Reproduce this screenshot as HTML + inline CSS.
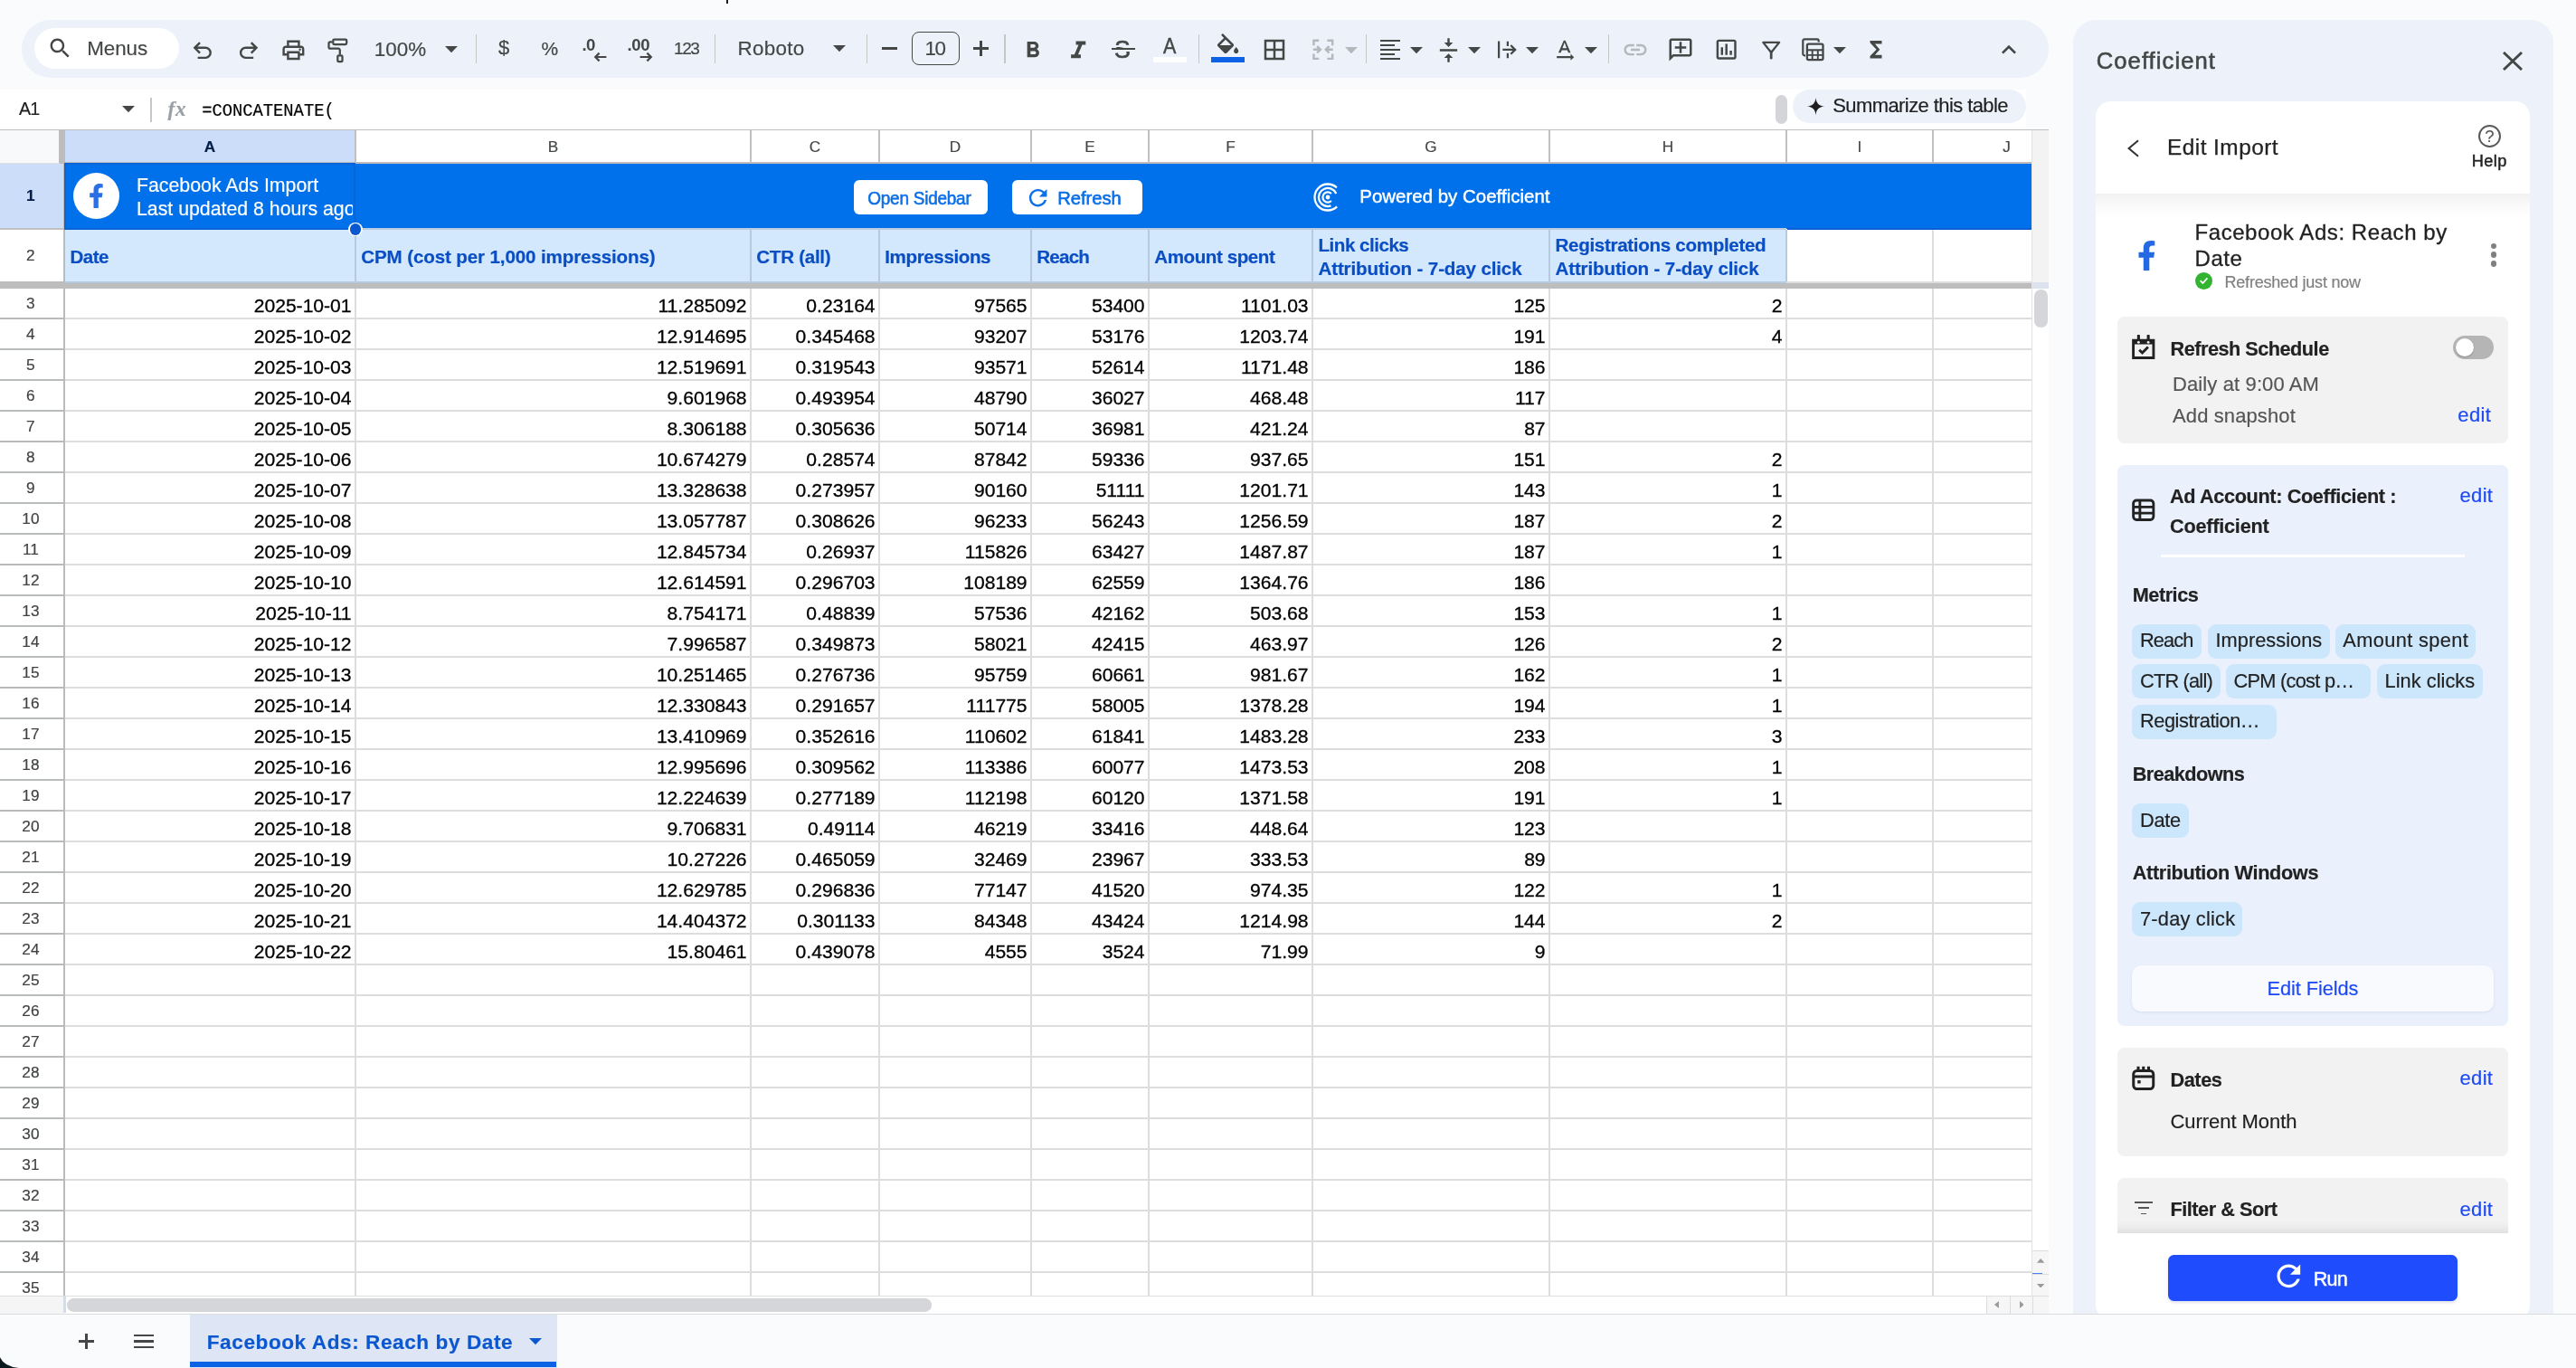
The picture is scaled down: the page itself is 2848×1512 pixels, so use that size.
<!DOCTYPE html>
<html><head><meta charset="utf-8"><title>Facebook Ads: Reach by Date - Google Sheets</title>
<style>
html,body{margin:0;padding:0;}
body{width:2848px;height:1512px;overflow:hidden;position:relative;background:#f9fbfd;font-family:"Liberation Sans",sans-serif;}
.a{position:absolute;display:block;}
.t{position:absolute;white-space:nowrap;-webkit-text-stroke:0.18px;}
#root{position:absolute;left:0;top:0;width:2848px;height:1512px;overflow:hidden;will-change:transform;}
</style></head><body><div id="root">
<div class="a" style="left:802px;top:0px;width:4.4px;height:5px;background:#fff;"></div>
<div class="a" style="left:803px;top:0px;width:2.4px;height:3.9px;background:#1a1a1a;"></div>
<div class="a" style="left:24px;top:22px;width:2241px;height:64px;background:#edf2fa;border-radius:32px;"></div>
<div class="a" style="left:38px;top:31px;width:160px;height:45px;background:#fff;border-radius:23px;"></div>
<svg class="a" style="left:51.9px;top:38.5px;" width="28.8" height="28.8" viewBox="0 0 24 24"><g fill="#444746"><path d="M15.5 14h-.79l-.28-.27C15.41 12.59 16 11.11 16 9.5 16 5.91 13.09 3 9.5 3S3 5.91 3 9.5 5.91 16 9.5 16c1.61 0 3.09-.59 4.23-1.57l.27.28v.79l5 4.99L20.49 19l-4.99-5zm-6 0C7.01 14 5 11.99 5 9.5S7.01 5 9.5 5 14 7.01 14 9.5 11.99 14 9.5 14z"/></g></svg>
<div class="t " style="left:96.25px;top:39.73px;font-size:22.4px;line-height:27px;color:#444746;letter-spacing:-0.094px;">Menus</div>
<svg class="a" style="left:210.1px;top:42.2px;" width="28.8" height="28.8" viewBox="0 0 24 24"><g fill="none" stroke="#444746" stroke-width="2"><path d="M9.2 4.2 L4.4 9 L9.2 13.8 M4.6 9 H14.3 a4.6 4.6 0 0 1 0 9.2 H7.2" stroke-linejoin="miter"/></g></svg>
<svg class="a" style="left:259.9px;top:42.2px;" width="28.8" height="28.8" viewBox="0 0 24 24"><g fill="none" stroke="#444746" stroke-width="2"><path d="M14.8 4.2 L19.6 9 L14.8 13.8 M19.4 9 H9.7 a4.6 4.6 0 0 0 0 9.2 H16.8" stroke-linejoin="miter"/></g></svg>
<svg class="a" style="left:310.1px;top:40.9px;" width="28.8" height="28.8" viewBox="0 0 24 24"><g fill="#444746"><path d="M19 8h-1V3H6v5H5c-1.66 0-3 1.34-3 3v6h4v4h12v-4h4v-6c0-1.66-1.34-3-3-3zM8 5h8v3H8V5zm8 12v2H8v-4h8v2zm2-2v-2H6v2H4v-4c0-.55.45-1 1-1h14c.55 0 1 .45 1 1v4h-2z"/><circle cx="18" cy="11.5" r="1"/></g></svg>
<svg class="a" style="left:360px;top:40px;" width="28" height="32" viewBox="360 40 28 32"><g fill="none" stroke="#444746" stroke-width="2.25" stroke-linejoin="round"><rect x="368.3" y="43.5" width="14.9" height="5.6" rx="1.3"/><path d="M367.4 46.3h-2.2a1.7 1.7 0 0 0-1.7 1.7v4a1.7 1.7 0 0 0 1.7 1.7h8.9a1.7 1.7 0 0 1 1.7 1.7v5"/><rect x="373.3" y="61.4" width="5.2" height="6.7" rx="1.2"/></g></svg>
<div class="t " style="left:413.75px;top:40.73px;font-size:22.4px;line-height:27px;color:#444746;letter-spacing:0.083px;">100%</div>
<svg class="a" style="left:492.3px;top:51.0px;" width="14" height="7.2" viewBox="0 0 14 7.2"><path d="M0 0h14l-7 7.2z" fill="#444746"/></svg>
<div class="a" style="left:525.7px;top:38px;width:1.6px;height:32px;background:#c4c7c5;"></div>
<div class="t " style="left:551px;top:40.37px;font-size:22px;line-height:26px;color:#444746;">$</div>
<div class="t " style="left:598.5px;top:41.22px;font-size:21px;line-height:25px;color:#444746;">%</div>
<div class="t " style="left:643.4px;top:38.55px;font-size:18.6px;line-height:22px;color:#444746;font-weight:bold;letter-spacing:-0.5px;-webkit-text-stroke:0;">.0</div>
<svg class="a" style="left:651.5px;top:50.6px;" width="24" height="24" viewBox="0 0 24 24"><g fill="none" stroke="#444746" stroke-width="2.2"><path d="M18.4 12H6.6M10.6 7.6 L6.2 12 L10.6 16.4"/></g></svg>
<div class="t " style="left:693.4px;top:38.55px;font-size:18.6px;line-height:22px;color:#444746;font-weight:bold;letter-spacing:-0.3px;-webkit-text-stroke:0;">.00</div>
<svg class="a" style="left:701.5px;top:50.6px;" width="24" height="24" viewBox="0 0 24 24"><g fill="none" stroke="#444746" stroke-width="2.2"><path d="M5.6 12H17.4M13.4 7.6 L17.8 12 L13.4 16.4"/></g></svg>
<div class="t " style="left:745px;top:41.91px;font-size:19px;line-height:23px;color:#444746;letter-spacing:-1.4px;">123</div>
<div class="a" style="left:789.7px;top:38px;width:1.6px;height:32px;background:#c4c7c5;"></div>
<div class="t " style="left:815.5px;top:39.53px;font-size:22.4px;line-height:27px;color:#444746;letter-spacing:0.325px;">Roboto</div>
<svg class="a" style="left:921px;top:50.0px;" width="14" height="7.2" viewBox="0 0 14 7.2"><path d="M0 0h14l-7 7.2z" fill="#444746"/></svg>
<div class="a" style="left:957.7px;top:38px;width:1.6px;height:32px;background:#c4c7c5;"></div>
<div class="a" style="left:975px;top:52.4px;width:16.5px;height:2.6px;background:#444746;"></div>
<div class="a" style="left:1008px;top:35px;width:53px;height:36.5px;box-sizing:border-box;border:1.6px solid #444746;border-radius:8px;"></div>
<div class="t " style="left:1022.6px;top:39.53px;font-size:22.4px;line-height:27px;color:#444746;letter-spacing:-1.6px;">10</div>
<div class="a" style="left:1076px;top:52.4px;width:16.5px;height:2.6px;background:#444746;"></div>
<div class="a" style="left:1083px;top:45.4px;width:2.6px;height:16.5px;background:#444746;"></div>
<div class="a" style="left:1110.2px;top:38px;width:1.6px;height:32px;background:#c4c7c5;"></div>
<svg class="a" style="left:1127.4px;top:40.8px;" width="29.6" height="29.6" viewBox="0 0 24 24"><g fill="#444746"><path d="M15.6 10.79c.97-.67 1.65-1.77 1.65-2.79 0-2.26-1.75-4-4-4H7v14h7.04c2.09 0 3.71-1.7 3.71-3.79 0-1.52-.86-2.82-2.15-3.42zM10 6.5h3c.83 0 1.5.67 1.5 1.5s-.67 1.5-1.5 1.5h-3v-3zm3.5 9H10v-3h3.5c.83 0 1.5.67 1.5 1.5s-.67 1.5-1.5 1.5z"/></g></svg>
<svg class="a" style="left:1176.0px;top:40.4px;" width="32.4" height="32.4" viewBox="0 0 24 24"><g fill="#444746"><path d="M10 4v3h2.21l-3.42 8H6v3h8v-3h-2.21l3.42-8H18V4z"/></g></svg>
<div class="t " style="left:1232.2px;top:38.33px;font-size:27.6px;line-height:33px;color:#444746;transform:scaleX(.96);transform-origin:left;-webkit-text-stroke:0.7px #444746;">S</div>
<div class="a" style="left:1228.8px;top:52.5px;width:25.8px;height:2.3px;background:#444746;"></div>
<div class="a" style="left:1228.8px;top:50.3px;width:25.8px;height:2.2px;background:#edf2fa;"></div>
<div class="a" style="left:1228.8px;top:54.8px;width:25.8px;height:2.2px;background:#edf2fa;"></div>
<div class="t " style="left:1285.6px;top:36.24px;font-size:24.4px;line-height:29px;color:#444746;transform:scaleX(.88);transform-origin:left;-webkit-text-stroke:0.45px #444746;">A</div>
<div class="a" style="left:1275px;top:63px;width:37px;height:6px;background:#fff;"></div>
<div class="a" style="left:1324.7px;top:38px;width:1.6px;height:32px;background:#c4c7c5;"></div>
<svg class="a" style="left:1341.6px;top:37.2px;" width="31.2" height="31.2" viewBox="0 0 24 24"><path fill="#444746" d="M16.56 8.94L7.62 0 6.21 1.41l2.38 2.38-5.15 5.15c-.59.59-.59 1.54 0 2.12l5.5 5.5c.29.29.68.44 1.06.44s.77-.15 1.06-.44l5.5-5.5c.59-.58.59-1.53 0-2.12zM5.21 10L10 5.21 14.79 10H5.21zM19 11.5s-2 2.17-2 3.5c0 1.1.9 2 2 2s2-.9 2-2c0-1.33-2-3.5-2-3.5z"/></svg>
<div class="a" style="left:1339px;top:63px;width:37px;height:6px;background:#0b62e6;"></div>
<svg class="a" style="left:1394.4px;top:40.2px;" width="30" height="30" viewBox="0 0 24 24"><g fill="#444746"><path d="M3 3v18h18V3H3zm8 16H5v-6h6v6zm0-8H5V5h6v6zm8 8h-6v-6h6v6zm0-8h-6V5h6v6z"/></g></svg>
<svg class="a" style="left:1448.5px;top:41.2px;" width="27.6" height="27.6" viewBox="0 0 24 24"><g fill="none" stroke="#b4b7bb" stroke-width="2.1"><path d="M3 8V3.2h5M16 3.2h5V8M21 16v4.8h-5M8 20.8H3V16" /><path d="M2.5 12h6.5M6.2 8.8 L9.4 12 L6.2 15.2M21.5 12H15M17.8 8.8 L14.6 12 L17.8 15.2"/></g></svg>
<svg class="a" style="left:1487.4px;top:51.6px;" width="14" height="7.2" viewBox="0 0 14 7.2"><path d="M0 0h14l-7 7.2z" fill="#b4b7bb"/></svg>
<div class="a" style="left:1509.7px;top:38px;width:1.6px;height:32px;background:#c4c7c5;"></div>
<div class="a" style="left:1526.2px;top:43.6px;width:22px;height:2.25px;background:#444746;"></div>
<div class="a" style="left:1526.2px;top:48.7px;width:15.7px;height:2.25px;background:#444746;"></div>
<div class="a" style="left:1526.2px;top:53.75px;width:22px;height:2.25px;background:#444746;"></div>
<div class="a" style="left:1526.2px;top:58.8px;width:15.7px;height:2.25px;background:#444746;"></div>
<div class="a" style="left:1526.2px;top:63.85px;width:22px;height:2.25px;background:#444746;"></div>
<svg class="a" style="left:1559.2px;top:51.6px;" width="14" height="7.2" viewBox="0 0 14 7.2"><path d="M0 0h14l-7 7.2z" fill="#444746"/></svg>
<svg class="a" style="left:1586.5px;top:40.9px;" width="29" height="29" viewBox="0 0 24 24"><g fill="#444746"><path d="M8 19h3v4h2v-4h3l-4-4-4 4zm8-14h-3V1h-2v4H8l4 4 4-4zM4 11v2h16v-2H4z"/></g></svg>
<svg class="a" style="left:1623.4px;top:51.6px;" width="14" height="7.2" viewBox="0 0 14 7.2"><path d="M0 0h14l-7 7.2z" fill="#444746"/></svg>
<svg class="a" style="left:1650px;top:40px;" width="30" height="30" viewBox="1650 40 30 30"><g fill="none" stroke="#444746" stroke-width="2.25"><path d="M1657.1 45.4V64.2M1666.9 45.7V51M1666.9 58.7V64.2M1661.3 54.9H1674.2M1670.3 50L1675.2 54.9L1670.3 59.8"/></g></svg>
<svg class="a" style="left:1687.4px;top:51.6px;" width="14" height="7.2" viewBox="0 0 14 7.2"><path d="M0 0h14l-7 7.2z" fill="#444746"/></svg>
<svg class="a" style="left:1715.45px;top:40.65px;" width="29.5" height="29.5" viewBox="0 0 24 24"><g fill="#444746"><path d="M12.75 3h-1.5L6.5 14h2.1l.9-2.2h5l.9 2.2h2.1L12.75 3zm-2.62 7L12 4.98 13.87 10h-3.74zm10.37 8l-3-3v2H5v2h12.5v2l3-3z"/></g></svg>
<svg class="a" style="left:1752.3px;top:51.6px;" width="14" height="7.2" viewBox="0 0 14 7.2"><path d="M0 0h14l-7 7.2z" fill="#444746"/></svg>
<div class="a" style="left:1777.7px;top:38px;width:1.6px;height:32px;background:#c4c7c5;"></div>
<svg class="a" style="left:1793.3px;top:40.2px;" width="30" height="30" viewBox="0 0 24 24"><g fill="#b4b7bb"><path d="M3.9 12c0-1.71 1.39-3.1 3.1-3.1h4V7H7c-2.76 0-5 2.24-5 5s2.24 5 5 5h4v-1.9H7c-1.71 0-3.1-1.39-3.1-3.1zM8 13h8v-2H8v2zm9-6h-4v1.9h4c1.71 0 3.1 1.39 3.1 3.1s-1.39 3.1-3.1 3.1h-4V17h4c2.76 0 5-2.24 5-5s-2.24-5-5-5z"/></g></svg>
<svg class="a" style="left:1843.4px;top:40.0px;" width="30" height="30" viewBox="0 0 24 24"><g fill="#444746" transform="translate(24,0) scale(-1,1)"><path d="M22 4c0-1.1-.9-2-2-2H4c-1.1 0-2 .9-2 2v12c0 1.1.9 2 2 2h14l4 4V4zm-2 13.17L18.83 16H4V4h16v13.17zM13 5h-2v4H7v2h4v4h2v-4h4V9h-4z"/></g></svg>
<svg class="a" style="left:1893.8px;top:40.1px;" width="29.4" height="29.4" viewBox="0 0 24 24"><g fill="#444746"><path d="M9 17H7v-7h2v7zm4 0h-2V7h2v10zm4 0h-2v-4h2v4zm2 2H5V5h14v14zm0-16H5c-1.1 0-2 .9-2 2v14c0 1.1.9 2 2 2h14c1.1 0 2-.9 2-2V5c0-1.1-.9-2-2-2z"/></g></svg>
<svg class="a" style="left:1944px;top:42px;" width="28" height="26" viewBox="1944 42 28 26"><g fill="none" stroke="#444746" stroke-linejoin="round"><path d="M1949.3 46.9H1967.1L1958.2 58Z" stroke-width="2.3"/><path d="M1958.2 57V64.2" stroke-width="2.7" stroke-linecap="round"/></g></svg>
<svg class="a" style="left:1988px;top:40px;" width="32" height="30" viewBox="1988 40 32 30"><g fill="none" stroke="#444746"><path d="M2010.7 46.4V45a1.7 1.7 0 0 0-1.7-1.7H1995a1.7 1.7 0 0 0-1.7 1.7V59.6a1.7 1.7 0 0 0 1.7 1.7h1" stroke-width="2.2"/><rect x="1997.9" y="48.6" width="17.6" height="17.6" rx="1.6" stroke-width="2.3"/><path d="M1997.9 55.3h17.6" stroke-width="2.1"/><path d="M1997.9 60.9h17.6M2003.7 55.3v10.9M2009.8 55.3v10.9" stroke-width="1.9"/></g></svg>
<svg class="a" style="left:2026.8px;top:51.6px;" width="14" height="7.2" viewBox="0 0 14 7.2"><path d="M0 0h14l-7 7.2z" fill="#444746"/></svg>
<svg class="a" style="left:2060.5px;top:40px;" width="26" height="29.4" viewBox="0 0 24 24" preserveAspectRatio="none"><path fill="#444746" d="M18 4H6v2l6.5 6L6 18v2h12v-3h-7l5-5-5-5h7z"/></svg>
<svg class="a" style="left:2205.0px;top:38.6px;" width="32" height="32" viewBox="0 0 24 24"><g fill="#444746"><path d="M12 8l-6 6 1.41 1.41L12 10.83l4.59 4.58L18 14z"/></g></svg>
<div class="a" style="left:0px;top:99px;width:2240px;height:44px;background:#fff;"></div>
<div class="a" style="left:0px;top:142.6px;width:2265px;height:1.3px;background:#c0c0c0;"></div>
<div class="t " style="left:21px;top:108.20px;font-size:19.6px;line-height:24px;color:#1f1f1f;letter-spacing:-0.7px;">A1</div>
<svg class="a" style="left:134.5px;top:117.2px;" width="14" height="7.2" viewBox="0 0 14 7.2"><path d="M0 0h14l-7 7.2z" fill="#444746"/></svg>
<div class="a" style="left:166px;top:108px;width:2px;height:27px;background:#c7c7c7;"></div>
<div class="t " style="left:185.6px;top:106.37px;font-size:23.2px;line-height:28px;color:#9aa0a6;font-family:'Liberation Serif',serif;font-style:italic;font-weight:bold;letter-spacing:0.6px;">fx</div>
<div class="t " style="left:223.2px;top:111.90px;font-size:18.8px;line-height:23px;color:#000;font-family:'Liberation Mono',monospace;transform:scaleY(1.09);transform-origin:0 16.50px;">=CONCATENATE(</div>
<div class="a" style="left:1963px;top:105px;width:13px;height:32px;background:#d3d5d9;border-radius:6.5px;"></div>
<div class="a" style="left:1982px;top:99.3px;width:257.5px;height:36.4px;background:#edf2fa;border-radius:18.2px;"></div>
<svg class="a" style="left:1996.5px;top:107px;" width="21" height="21" viewBox="0 0 24 24"><path d="M12 1 C12.7 8 16 11.3 23 12 C16 12.7 12.7 16 12 23 C11.3 16 8 12.7 1 12 C8 11.3 11.3 8 12 1z" fill="#1f1f1f"/></svg>
<div class="t " style="left:2026.25px;top:103.87px;font-size:22px;line-height:26px;color:#1f1f1f;letter-spacing:-0.586px;">Summarize this table</div>
<div class="a" style="left:0px;top:144px;width:2246px;height:1289px;background:#fff;"></div>
<div class="a" style="left:2247px;top:144px;width:18px;height:168px;background:#f3f3f3;"></div>
<div class="a" style="left:2247px;top:312px;width:18px;height:7px;background:#dce2ee;"></div>
<div class="a" style="left:2247px;top:319px;width:18px;height:1114px;background:#fff;"></div>
<div class="a" style="left:2246px;top:144px;width:1px;height:1289px;background:#e3e3e3;"></div>
<div class="a" style="left:2249.3px;top:320px;width:14.5px;height:41.6px;background:#d4d6da;border-radius:7.25px;"></div>
<div class="a" style="left:2247px;top:1382.5px;width:18px;height:50.5px;background:#f6f6f6;"></div>
<div class="a" style="left:2247px;top:1382px;width:18px;height:1.2px;background:#dcdcdc;"></div>
<div class="a" style="left:2247px;top:1408px;width:18px;height:1.1px;background:#dcdcdc;"></div>
<div class="a" style="left:2247px;top:1406.7px;width:11px;height:1.3px;background:#4a80f5;"></div>
<svg class="a" style="left:2251.6px;top:1391px;" width="8.3" height="4.7" viewBox="0 0 8.3 4.7"><path d="M0 4.7h8.3L4.15 0z" fill="#9a9a9a"/></svg>
<svg class="a" style="left:2251.6px;top:1418.7px;" width="8.3" height="4.7" viewBox="0 0 8.3 4.7"><path d="M0 0h8.3L4.15 4.7z" fill="#9a9a9a"/></svg>
<div class="a" style="left:0px;top:144px;width:65px;height:36px;background:#f8f9fa;"></div>
<div class="a" style="left:65px;top:144px;width:6.5px;height:37px;background:#bdbdbd;"></div>
<div class="a" style="left:72px;top:144px;width:320px;height:36px;background:#ccddf9;"></div>
<div class="t " style="left:72px;top:151.94px;font-size:17.2px;line-height:21px;color:#041e49;font-weight:bold;width:320px;text-align:center;">A</div>
<div class="a" style="left:392px;top:144px;width:2px;height:36px;background:#c0c0c0;"></div>
<div class="t " style="left:394px;top:151.94px;font-size:17.2px;line-height:21px;color:#444746;width:435px;text-align:center;">B</div>
<div class="a" style="left:829px;top:144px;width:2px;height:36px;background:#c0c0c0;"></div>
<div class="t " style="left:831px;top:151.94px;font-size:17.2px;line-height:21px;color:#444746;width:140px;text-align:center;">C</div>
<div class="a" style="left:971px;top:144px;width:2px;height:36px;background:#c0c0c0;"></div>
<div class="t " style="left:973px;top:151.94px;font-size:17.2px;line-height:21px;color:#444746;width:166px;text-align:center;">D</div>
<div class="a" style="left:1139px;top:144px;width:2px;height:36px;background:#c0c0c0;"></div>
<div class="t " style="left:1141px;top:151.94px;font-size:17.2px;line-height:21px;color:#444746;width:128px;text-align:center;">E</div>
<div class="a" style="left:1269px;top:144px;width:2px;height:36px;background:#c0c0c0;"></div>
<div class="t " style="left:1271px;top:151.94px;font-size:17.2px;line-height:21px;color:#444746;width:179px;text-align:center;">F</div>
<div class="a" style="left:1450px;top:144px;width:2px;height:36px;background:#c0c0c0;"></div>
<div class="t " style="left:1452px;top:151.94px;font-size:17.2px;line-height:21px;color:#444746;width:260px;text-align:center;">G</div>
<div class="a" style="left:1712px;top:144px;width:2px;height:36px;background:#c0c0c0;"></div>
<div class="t " style="left:1714px;top:151.94px;font-size:17.2px;line-height:21px;color:#444746;width:260px;text-align:center;">H</div>
<div class="a" style="left:1974px;top:144px;width:2px;height:36px;background:#c0c0c0;"></div>
<div class="t " style="left:1976px;top:151.94px;font-size:17.2px;line-height:21px;color:#444746;width:160px;text-align:center;">I</div>
<div class="a" style="left:2136px;top:144px;width:2px;height:36px;background:#c0c0c0;"></div>
<div class="t " style="left:2214.3px;top:151.94px;font-size:17.2px;line-height:21px;color:#444746;">J</div>
<div class="a" style="left:71.5px;top:179.1px;width:2174.5px;height:2.3px;background:#bcbcbc;"></div>
<div class="a" style="left:0px;top:181px;width:70px;height:72px;background:#ccddf9;"></div>
<div class="a" style="left:70px;top:181px;width:2px;height:1252px;background:#b9bcbb;"></div>
<div class="t " style="left:0px;top:205.74px;font-size:17.2px;line-height:21px;color:#041e49;font-weight:bold;width:67.8px;text-align:center;">1</div>
<div class="t " style="left:0px;top:271.74px;font-size:17.2px;line-height:21px;color:#3f4241;width:67.8px;text-align:center;">2</div>
<div class="a" style="left:0px;top:252px;width:70px;height:2px;background:#c0c0c0;"></div>
<div class="a" style="left:0px;top:179.6px;width:66px;height:1.6px;background:#dfe1e3;"></div>
<div class="t " style="left:0px;top:324.84px;font-size:17.2px;line-height:21px;color:#3f4241;width:67.8px;text-align:center;">3</div>
<div class="a" style="left:0px;top:351px;width:71px;height:2px;background:#b9bcbc;"></div>
<div class="t " style="left:0px;top:358.84px;font-size:17.2px;line-height:21px;color:#3f4241;width:67.8px;text-align:center;">4</div>
<div class="a" style="left:0px;top:385px;width:71px;height:2px;background:#b9bcbc;"></div>
<div class="t " style="left:0px;top:392.84px;font-size:17.2px;line-height:21px;color:#3f4241;width:67.8px;text-align:center;">5</div>
<div class="a" style="left:0px;top:419px;width:71px;height:2px;background:#b9bcbc;"></div>
<div class="t " style="left:0px;top:426.84px;font-size:17.2px;line-height:21px;color:#3f4241;width:67.8px;text-align:center;">6</div>
<div class="a" style="left:0px;top:453px;width:71px;height:2px;background:#b9bcbc;"></div>
<div class="t " style="left:0px;top:460.84px;font-size:17.2px;line-height:21px;color:#3f4241;width:67.8px;text-align:center;">7</div>
<div class="a" style="left:0px;top:487px;width:71px;height:2px;background:#b9bcbc;"></div>
<div class="t " style="left:0px;top:494.84px;font-size:17.2px;line-height:21px;color:#3f4241;width:67.8px;text-align:center;">8</div>
<div class="a" style="left:0px;top:521px;width:71px;height:2px;background:#b9bcbc;"></div>
<div class="t " style="left:0px;top:528.84px;font-size:17.2px;line-height:21px;color:#3f4241;width:67.8px;text-align:center;">9</div>
<div class="a" style="left:0px;top:555px;width:71px;height:2px;background:#b9bcbc;"></div>
<div class="t " style="left:0px;top:562.84px;font-size:17.2px;line-height:21px;color:#3f4241;width:67.8px;text-align:center;">10</div>
<div class="a" style="left:0px;top:589px;width:71px;height:2px;background:#b9bcbc;"></div>
<div class="t " style="left:0px;top:596.84px;font-size:17.2px;line-height:21px;color:#3f4241;width:67.8px;text-align:center;">11</div>
<div class="a" style="left:0px;top:623px;width:71px;height:2px;background:#b9bcbc;"></div>
<div class="t " style="left:0px;top:630.84px;font-size:17.2px;line-height:21px;color:#3f4241;width:67.8px;text-align:center;">12</div>
<div class="a" style="left:0px;top:657px;width:71px;height:2px;background:#b9bcbc;"></div>
<div class="t " style="left:0px;top:664.84px;font-size:17.2px;line-height:21px;color:#3f4241;width:67.8px;text-align:center;">13</div>
<div class="a" style="left:0px;top:691px;width:71px;height:2px;background:#b9bcbc;"></div>
<div class="t " style="left:0px;top:698.84px;font-size:17.2px;line-height:21px;color:#3f4241;width:67.8px;text-align:center;">14</div>
<div class="a" style="left:0px;top:725px;width:71px;height:2px;background:#b9bcbc;"></div>
<div class="t " style="left:0px;top:732.84px;font-size:17.2px;line-height:21px;color:#3f4241;width:67.8px;text-align:center;">15</div>
<div class="a" style="left:0px;top:759px;width:71px;height:2px;background:#b9bcbc;"></div>
<div class="t " style="left:0px;top:766.84px;font-size:17.2px;line-height:21px;color:#3f4241;width:67.8px;text-align:center;">16</div>
<div class="a" style="left:0px;top:793px;width:71px;height:2px;background:#b9bcbc;"></div>
<div class="t " style="left:0px;top:800.84px;font-size:17.2px;line-height:21px;color:#3f4241;width:67.8px;text-align:center;">17</div>
<div class="a" style="left:0px;top:827px;width:71px;height:2px;background:#b9bcbc;"></div>
<div class="t " style="left:0px;top:834.84px;font-size:17.2px;line-height:21px;color:#3f4241;width:67.8px;text-align:center;">18</div>
<div class="a" style="left:0px;top:861px;width:71px;height:2px;background:#b9bcbc;"></div>
<div class="t " style="left:0px;top:868.84px;font-size:17.2px;line-height:21px;color:#3f4241;width:67.8px;text-align:center;">19</div>
<div class="a" style="left:0px;top:895px;width:71px;height:2px;background:#b9bcbc;"></div>
<div class="t " style="left:0px;top:902.84px;font-size:17.2px;line-height:21px;color:#3f4241;width:67.8px;text-align:center;">20</div>
<div class="a" style="left:0px;top:929px;width:71px;height:2px;background:#b9bcbc;"></div>
<div class="t " style="left:0px;top:936.84px;font-size:17.2px;line-height:21px;color:#3f4241;width:67.8px;text-align:center;">21</div>
<div class="a" style="left:0px;top:963px;width:71px;height:2px;background:#b9bcbc;"></div>
<div class="t " style="left:0px;top:970.84px;font-size:17.2px;line-height:21px;color:#3f4241;width:67.8px;text-align:center;">22</div>
<div class="a" style="left:0px;top:997px;width:71px;height:2px;background:#b9bcbc;"></div>
<div class="t " style="left:0px;top:1004.84px;font-size:17.2px;line-height:21px;color:#3f4241;width:67.8px;text-align:center;">23</div>
<div class="a" style="left:0px;top:1031px;width:71px;height:2px;background:#b9bcbc;"></div>
<div class="t " style="left:0px;top:1038.84px;font-size:17.2px;line-height:21px;color:#3f4241;width:67.8px;text-align:center;">24</div>
<div class="a" style="left:0px;top:1065px;width:71px;height:2px;background:#b9bcbc;"></div>
<div class="t " style="left:0px;top:1072.84px;font-size:17.2px;line-height:21px;color:#3f4241;width:67.8px;text-align:center;">25</div>
<div class="a" style="left:0px;top:1099px;width:71px;height:2px;background:#b9bcbc;"></div>
<div class="t " style="left:0px;top:1106.84px;font-size:17.2px;line-height:21px;color:#3f4241;width:67.8px;text-align:center;">26</div>
<div class="a" style="left:0px;top:1133px;width:71px;height:2px;background:#b9bcbc;"></div>
<div class="t " style="left:0px;top:1140.84px;font-size:17.2px;line-height:21px;color:#3f4241;width:67.8px;text-align:center;">27</div>
<div class="a" style="left:0px;top:1167px;width:71px;height:2px;background:#b9bcbc;"></div>
<div class="t " style="left:0px;top:1174.84px;font-size:17.2px;line-height:21px;color:#3f4241;width:67.8px;text-align:center;">28</div>
<div class="a" style="left:0px;top:1201px;width:71px;height:2px;background:#b9bcbc;"></div>
<div class="t " style="left:0px;top:1208.84px;font-size:17.2px;line-height:21px;color:#3f4241;width:67.8px;text-align:center;">29</div>
<div class="a" style="left:0px;top:1235px;width:71px;height:2px;background:#b9bcbc;"></div>
<div class="t " style="left:0px;top:1242.84px;font-size:17.2px;line-height:21px;color:#3f4241;width:67.8px;text-align:center;">30</div>
<div class="a" style="left:0px;top:1269px;width:71px;height:2px;background:#b9bcbc;"></div>
<div class="t " style="left:0px;top:1276.84px;font-size:17.2px;line-height:21px;color:#3f4241;width:67.8px;text-align:center;">31</div>
<div class="a" style="left:0px;top:1303px;width:71px;height:2px;background:#b9bcbc;"></div>
<div class="t " style="left:0px;top:1310.84px;font-size:17.2px;line-height:21px;color:#3f4241;width:67.8px;text-align:center;">32</div>
<div class="a" style="left:0px;top:1337px;width:71px;height:2px;background:#b9bcbc;"></div>
<div class="t " style="left:0px;top:1344.84px;font-size:17.2px;line-height:21px;color:#3f4241;width:67.8px;text-align:center;">33</div>
<div class="a" style="left:0px;top:1371px;width:71px;height:2px;background:#b9bcbc;"></div>
<div class="t " style="left:0px;top:1378.84px;font-size:17.2px;line-height:21px;color:#3f4241;width:67.8px;text-align:center;">34</div>
<div class="a" style="left:0px;top:1405px;width:71px;height:2px;background:#b9bcbc;"></div>
<div class="t " style="left:0px;top:1412.84px;font-size:17.2px;line-height:21px;color:#3f4241;width:67.8px;text-align:center;">35</div>
<div class="a" style="left:72px;top:181.3px;width:2174px;height:72.2px;background:#0070eb;"></div>
<div class="a" style="left:80.8px;top:191px;width:51.2px;height:51.2px;background:#fff;border-radius:50%;"></div>
<svg class="a" style="left:97.5px;top:203px;" width="16.9" height="27" viewBox="0 0 320 512"><path d="M279.14 288l14.22-92.66h-88.91v-60.13c0-25.35 12.42-50.06 52.24-50.06h40.42V6.26S260.43 0 225.36 0c-73.22 0-121.08 44.38-121.08 124.72v70.62H22.89V288h81.39v224h100.17V288z" fill="#2b6fe3"/></svg>
<div class="a" style="left:151px;top:184px;width:239px;height:66px;overflow:hidden;">
<div class="t" style="left:0;top:8.2px;font-size:21.3px;line-height:26px;color:#fff;">Facebook Ads Import</div>
<div class="t" style="left:0;top:34.2px;font-size:21.3px;line-height:26px;color:#fff;">Last updated 8 hours ago</div>
</div>
<div class="a" style="left:944.3px;top:199.3px;width:147.7px;height:37.7px;background:#fff;border-radius:6px;"></div>
<div class="t " style="left:959.25px;top:207.61px;font-size:19px;line-height:23px;color:#0b6fe8;letter-spacing:-0.25px;-webkit-text-stroke:0.55px #0b6fe8;transform:scaleY(1.065);transform-origin:0 18.09px;">Open Sidebar</div>
<div class="a" style="left:1119.3px;top:199.3px;width:143.7px;height:37.7px;background:#fff;border-radius:6px;"></div>
<svg class="a" style="left:1133.1px;top:203.5px;" width="29.3" height="29.3" viewBox="0 0 24 24"><path fill="#0b6fe8" d="M17.65 6.35C16.2 4.9 14.21 4 12 4c-4.42 0-7.99 3.58-7.99 8s3.57 8 7.99 8c3.73 0 6.84-2.55 7.73-6h-2.08c-.82 2.33-3.04 4-5.65 4-3.31 0-6-2.69-6-6s2.69-6 6-6c1.66 0 3.14.69 4.22 1.78L13 11h7V4l-2.35 2.35z"/></svg>
<div class="t " style="left:1169.25px;top:206.70px;font-size:20.2px;line-height:24px;color:#0b6fe8;letter-spacing:-0.021px;-webkit-text-stroke:0.6px #0b6fe8;">Refresh</div>
<svg class="a" style="left:1451.5px;top:201.7px;" width="32" height="32" viewBox="0 0 32 32"><g fill="none" stroke="#fff" stroke-linecap="butt"><path d="M25.89 5.40 A14.5 14.5 0 1 0 26.16 26.34" stroke-width="2.3"/><path d="M25.21 11.98 A10.05 10.05 0 1 0 19.44 25.44" stroke-width="2.3"/><path d="M19.89 11.97 A5.6 5.6 0 1 0 19.89 20.03" stroke-width="2.2"/></g><circle cx="16" cy="16" r="2.45" fill="#fff"/></svg>
<div class="t " style="left:1503.25px;top:205.43px;font-size:20.4px;line-height:24px;color:#fff;letter-spacing:0.042px;-webkit-text-stroke:0.45px #fff;">Powered by Coefficient</div>
<div class="a" style="left:72px;top:253.5px;width:1903px;height:58px;background:#d3e7fd;"></div>
<div class="a" style="left:392px;top:253.5px;width:2px;height:58px;background:#b6c9df;"></div>
<div class="a" style="left:829px;top:253.5px;width:2px;height:58px;background:#b6c9df;"></div>
<div class="a" style="left:971px;top:253.5px;width:2px;height:58px;background:#b6c9df;"></div>
<div class="a" style="left:1139px;top:253.5px;width:2px;height:58px;background:#b6c9df;"></div>
<div class="a" style="left:1269px;top:253.5px;width:2px;height:58px;background:#b6c9df;"></div>
<div class="a" style="left:1450px;top:253.5px;width:2px;height:58px;background:#b6c9df;"></div>
<div class="a" style="left:1712px;top:253.5px;width:2px;height:58px;background:#b6c9df;"></div>
<div class="a" style="left:1974px;top:253.5px;width:2px;height:58px;background:#b6c9df;"></div>
<div class="a" style="left:2136px;top:253.5px;width:2px;height:58px;background:#dddddd;"></div>
<div class="a" style="left:393px;top:252px;width:1582px;height:2px;background:#b9cbdc;"></div>
<div class="a" style="left:1976px;top:252.2px;width:270px;height:1.6px;background:#0a5ed6;"></div>
<div class="t " style="left:77.5px;top:270.86px;font-size:20.6px;line-height:25px;color:#0a4ec4;font-weight:bold;letter-spacing:-0.583px;">Date</div>
<div class="t " style="left:399.25px;top:270.86px;font-size:20.6px;line-height:25px;color:#0a4ec4;font-weight:bold;letter-spacing:-0.135px;">CPM (cost per 1,000 impressions)</div>
<div class="t " style="left:836.25px;top:270.86px;font-size:20.6px;line-height:25px;color:#0a4ec4;font-weight:bold;letter-spacing:-0.281px;">CTR (all)</div>
<div class="t " style="left:978.25px;top:270.86px;font-size:20.6px;line-height:25px;color:#0a4ec4;font-weight:bold;letter-spacing:-0.4px;">Impressions</div>
<div class="t " style="left:1146.25px;top:270.86px;font-size:20.6px;line-height:25px;color:#0a4ec4;font-weight:bold;letter-spacing:-0.781px;">Reach</div>
<div class="t " style="left:1276.25px;top:270.86px;font-size:20.6px;line-height:25px;color:#0a4ec4;font-weight:bold;letter-spacing:-0.443px;">Amount spent</div>
<div class="t " style="left:1457.5px;top:257.96px;font-size:20.6px;line-height:25px;color:#0a4ec4;font-weight:bold;letter-spacing:-0.5px;">Link clicks</div>
<div class="t " style="left:1457.5px;top:283.66px;font-size:20.6px;line-height:25px;color:#0a4ec4;font-weight:bold;letter-spacing:-0.156px;">Attribution - 7-day click</div>
<div class="t " style="left:1719.5px;top:257.96px;font-size:20.6px;line-height:25px;color:#0a4ec4;font-weight:bold;letter-spacing:-0.324px;">Registrations completed</div>
<div class="t " style="left:1719.5px;top:283.66px;font-size:20.6px;line-height:25px;color:#0a4ec4;font-weight:bold;letter-spacing:-0.156px;">Attribution - 7-day click</div>
<div class="a" style="left:71px;top:180px;width:322px;height:74px;box-sizing:border-box;border:2px solid #0a64d8;"></div>
<div class="a" style="left:72px;top:311px;width:1903px;height:2.6px;background:#b6c9df;"></div>
<div class="a" style="left:1975px;top:311px;width:271px;height:2.6px;background:#dddddd;"></div>
<div class="a" style="left:0px;top:313.2px;width:2246px;height:5.6px;background:#bdbdbd;"></div>
<div class="a" style="left:0px;top:311px;width:71px;height:3px;background:#bdbdbd;"></div>
<div class="a" style="left:385.2px;top:245.6px;width:15.6px;height:15.6px;background:#fff;border-radius:50%;"></div>
<div class="a" style="left:386.6px;top:247px;width:12.8px;height:12.8px;background:#0b57d0;border-radius:50%;"></div>
<div class="a" style="left:72px;top:351px;width:2174px;height:2px;background:#dddddd;"></div>
<div class="a" style="left:72px;top:385px;width:2174px;height:2px;background:#dddddd;"></div>
<div class="a" style="left:72px;top:419px;width:2174px;height:2px;background:#dddddd;"></div>
<div class="a" style="left:72px;top:453px;width:2174px;height:2px;background:#dddddd;"></div>
<div class="a" style="left:72px;top:487px;width:2174px;height:2px;background:#dddddd;"></div>
<div class="a" style="left:72px;top:521px;width:2174px;height:2px;background:#dddddd;"></div>
<div class="a" style="left:72px;top:555px;width:2174px;height:2px;background:#dddddd;"></div>
<div class="a" style="left:72px;top:589px;width:2174px;height:2px;background:#dddddd;"></div>
<div class="a" style="left:72px;top:623px;width:2174px;height:2px;background:#dddddd;"></div>
<div class="a" style="left:72px;top:657px;width:2174px;height:2px;background:#dddddd;"></div>
<div class="a" style="left:72px;top:691px;width:2174px;height:2px;background:#dddddd;"></div>
<div class="a" style="left:72px;top:725px;width:2174px;height:2px;background:#dddddd;"></div>
<div class="a" style="left:72px;top:759px;width:2174px;height:2px;background:#dddddd;"></div>
<div class="a" style="left:72px;top:793px;width:2174px;height:2px;background:#dddddd;"></div>
<div class="a" style="left:72px;top:827px;width:2174px;height:2px;background:#dddddd;"></div>
<div class="a" style="left:72px;top:861px;width:2174px;height:2px;background:#dddddd;"></div>
<div class="a" style="left:72px;top:895px;width:2174px;height:2px;background:#dddddd;"></div>
<div class="a" style="left:72px;top:929px;width:2174px;height:2px;background:#dddddd;"></div>
<div class="a" style="left:72px;top:963px;width:2174px;height:2px;background:#dddddd;"></div>
<div class="a" style="left:72px;top:997px;width:2174px;height:2px;background:#dddddd;"></div>
<div class="a" style="left:72px;top:1031px;width:2174px;height:2px;background:#dddddd;"></div>
<div class="a" style="left:72px;top:1065px;width:2174px;height:2px;background:#dddddd;"></div>
<div class="a" style="left:72px;top:1099px;width:2174px;height:2px;background:#dddddd;"></div>
<div class="a" style="left:72px;top:1133px;width:2174px;height:2px;background:#dddddd;"></div>
<div class="a" style="left:72px;top:1167px;width:2174px;height:2px;background:#dddddd;"></div>
<div class="a" style="left:72px;top:1201px;width:2174px;height:2px;background:#dddddd;"></div>
<div class="a" style="left:72px;top:1235px;width:2174px;height:2px;background:#dddddd;"></div>
<div class="a" style="left:72px;top:1269px;width:2174px;height:2px;background:#dddddd;"></div>
<div class="a" style="left:72px;top:1303px;width:2174px;height:2px;background:#dddddd;"></div>
<div class="a" style="left:72px;top:1337px;width:2174px;height:2px;background:#dddddd;"></div>
<div class="a" style="left:72px;top:1371px;width:2174px;height:2px;background:#dddddd;"></div>
<div class="a" style="left:72px;top:1405px;width:2174px;height:2px;background:#dddddd;"></div>
<div class="a" style="left:392px;top:319px;width:2px;height:1114px;background:#dddddd;"></div>
<div class="a" style="left:829px;top:319px;width:2px;height:1114px;background:#dddddd;"></div>
<div class="a" style="left:971px;top:319px;width:2px;height:1114px;background:#dddddd;"></div>
<div class="a" style="left:1139px;top:319px;width:2px;height:1114px;background:#dddddd;"></div>
<div class="a" style="left:1269px;top:319px;width:2px;height:1114px;background:#dddddd;"></div>
<div class="a" style="left:1450px;top:319px;width:2px;height:1114px;background:#dddddd;"></div>
<div class="a" style="left:1712px;top:319px;width:2px;height:1114px;background:#dddddd;"></div>
<div class="a" style="left:1974px;top:319px;width:2px;height:1114px;background:#dddddd;"></div>
<div class="a" style="left:2136px;top:319px;width:2px;height:1114px;background:#dddddd;"></div>
<div class="t " style="left:73px;top:324.58px;font-size:21.1px;line-height:25px;color:#000;width:315.6px;text-align:right;-webkit-text-stroke:0.3px #000;">2025-10-01</div>
<div class="t " style="left:395px;top:324.58px;font-size:21.1px;line-height:25px;color:#000;width:430.6px;text-align:right;-webkit-text-stroke:0.3px #000;">11.285092</div>
<div class="t " style="left:832px;top:324.58px;font-size:21.1px;line-height:25px;color:#000;width:135.6px;text-align:right;-webkit-text-stroke:0.3px #000;">0.23164</div>
<div class="t " style="left:974px;top:324.58px;font-size:21.1px;line-height:25px;color:#000;width:161.6px;text-align:right;-webkit-text-stroke:0.3px #000;">97565</div>
<div class="t " style="left:1142px;top:324.58px;font-size:21.1px;line-height:25px;color:#000;width:123.6px;text-align:right;-webkit-text-stroke:0.3px #000;">53400</div>
<div class="t " style="left:1272px;top:324.58px;font-size:21.1px;line-height:25px;color:#000;width:174.6px;text-align:right;-webkit-text-stroke:0.3px #000;">1101.03</div>
<div class="t " style="left:1453px;top:324.58px;font-size:21.1px;line-height:25px;color:#000;width:255.6px;text-align:right;-webkit-text-stroke:0.3px #000;">125</div>
<div class="t " style="left:1715px;top:324.58px;font-size:21.1px;line-height:25px;color:#000;width:255.6px;text-align:right;-webkit-text-stroke:0.3px #000;">2</div>
<div class="t " style="left:73px;top:358.58px;font-size:21.1px;line-height:25px;color:#000;width:315.6px;text-align:right;-webkit-text-stroke:0.3px #000;">2025-10-02</div>
<div class="t " style="left:395px;top:358.58px;font-size:21.1px;line-height:25px;color:#000;width:430.6px;text-align:right;-webkit-text-stroke:0.3px #000;">12.914695</div>
<div class="t " style="left:832px;top:358.58px;font-size:21.1px;line-height:25px;color:#000;width:135.6px;text-align:right;-webkit-text-stroke:0.3px #000;">0.345468</div>
<div class="t " style="left:974px;top:358.58px;font-size:21.1px;line-height:25px;color:#000;width:161.6px;text-align:right;-webkit-text-stroke:0.3px #000;">93207</div>
<div class="t " style="left:1142px;top:358.58px;font-size:21.1px;line-height:25px;color:#000;width:123.6px;text-align:right;-webkit-text-stroke:0.3px #000;">53176</div>
<div class="t " style="left:1272px;top:358.58px;font-size:21.1px;line-height:25px;color:#000;width:174.6px;text-align:right;-webkit-text-stroke:0.3px #000;">1203.74</div>
<div class="t " style="left:1453px;top:358.58px;font-size:21.1px;line-height:25px;color:#000;width:255.6px;text-align:right;-webkit-text-stroke:0.3px #000;">191</div>
<div class="t " style="left:1715px;top:358.58px;font-size:21.1px;line-height:25px;color:#000;width:255.6px;text-align:right;-webkit-text-stroke:0.3px #000;">4</div>
<div class="t " style="left:73px;top:392.58px;font-size:21.1px;line-height:25px;color:#000;width:315.6px;text-align:right;-webkit-text-stroke:0.3px #000;">2025-10-03</div>
<div class="t " style="left:395px;top:392.58px;font-size:21.1px;line-height:25px;color:#000;width:430.6px;text-align:right;-webkit-text-stroke:0.3px #000;">12.519691</div>
<div class="t " style="left:832px;top:392.58px;font-size:21.1px;line-height:25px;color:#000;width:135.6px;text-align:right;-webkit-text-stroke:0.3px #000;">0.319543</div>
<div class="t " style="left:974px;top:392.58px;font-size:21.1px;line-height:25px;color:#000;width:161.6px;text-align:right;-webkit-text-stroke:0.3px #000;">93571</div>
<div class="t " style="left:1142px;top:392.58px;font-size:21.1px;line-height:25px;color:#000;width:123.6px;text-align:right;-webkit-text-stroke:0.3px #000;">52614</div>
<div class="t " style="left:1272px;top:392.58px;font-size:21.1px;line-height:25px;color:#000;width:174.6px;text-align:right;-webkit-text-stroke:0.3px #000;">1171.48</div>
<div class="t " style="left:1453px;top:392.58px;font-size:21.1px;line-height:25px;color:#000;width:255.6px;text-align:right;-webkit-text-stroke:0.3px #000;">186</div>
<div class="t " style="left:73px;top:426.58px;font-size:21.1px;line-height:25px;color:#000;width:315.6px;text-align:right;-webkit-text-stroke:0.3px #000;">2025-10-04</div>
<div class="t " style="left:395px;top:426.58px;font-size:21.1px;line-height:25px;color:#000;width:430.6px;text-align:right;-webkit-text-stroke:0.3px #000;">9.601968</div>
<div class="t " style="left:832px;top:426.58px;font-size:21.1px;line-height:25px;color:#000;width:135.6px;text-align:right;-webkit-text-stroke:0.3px #000;">0.493954</div>
<div class="t " style="left:974px;top:426.58px;font-size:21.1px;line-height:25px;color:#000;width:161.6px;text-align:right;-webkit-text-stroke:0.3px #000;">48790</div>
<div class="t " style="left:1142px;top:426.58px;font-size:21.1px;line-height:25px;color:#000;width:123.6px;text-align:right;-webkit-text-stroke:0.3px #000;">36027</div>
<div class="t " style="left:1272px;top:426.58px;font-size:21.1px;line-height:25px;color:#000;width:174.6px;text-align:right;-webkit-text-stroke:0.3px #000;">468.48</div>
<div class="t " style="left:1453px;top:426.58px;font-size:21.1px;line-height:25px;color:#000;width:255.6px;text-align:right;-webkit-text-stroke:0.3px #000;">117</div>
<div class="t " style="left:73px;top:460.58px;font-size:21.1px;line-height:25px;color:#000;width:315.6px;text-align:right;-webkit-text-stroke:0.3px #000;">2025-10-05</div>
<div class="t " style="left:395px;top:460.58px;font-size:21.1px;line-height:25px;color:#000;width:430.6px;text-align:right;-webkit-text-stroke:0.3px #000;">8.306188</div>
<div class="t " style="left:832px;top:460.58px;font-size:21.1px;line-height:25px;color:#000;width:135.6px;text-align:right;-webkit-text-stroke:0.3px #000;">0.305636</div>
<div class="t " style="left:974px;top:460.58px;font-size:21.1px;line-height:25px;color:#000;width:161.6px;text-align:right;-webkit-text-stroke:0.3px #000;">50714</div>
<div class="t " style="left:1142px;top:460.58px;font-size:21.1px;line-height:25px;color:#000;width:123.6px;text-align:right;-webkit-text-stroke:0.3px #000;">36981</div>
<div class="t " style="left:1272px;top:460.58px;font-size:21.1px;line-height:25px;color:#000;width:174.6px;text-align:right;-webkit-text-stroke:0.3px #000;">421.24</div>
<div class="t " style="left:1453px;top:460.58px;font-size:21.1px;line-height:25px;color:#000;width:255.6px;text-align:right;-webkit-text-stroke:0.3px #000;">87</div>
<div class="t " style="left:73px;top:494.58px;font-size:21.1px;line-height:25px;color:#000;width:315.6px;text-align:right;-webkit-text-stroke:0.3px #000;">2025-10-06</div>
<div class="t " style="left:395px;top:494.58px;font-size:21.1px;line-height:25px;color:#000;width:430.6px;text-align:right;-webkit-text-stroke:0.3px #000;">10.674279</div>
<div class="t " style="left:832px;top:494.58px;font-size:21.1px;line-height:25px;color:#000;width:135.6px;text-align:right;-webkit-text-stroke:0.3px #000;">0.28574</div>
<div class="t " style="left:974px;top:494.58px;font-size:21.1px;line-height:25px;color:#000;width:161.6px;text-align:right;-webkit-text-stroke:0.3px #000;">87842</div>
<div class="t " style="left:1142px;top:494.58px;font-size:21.1px;line-height:25px;color:#000;width:123.6px;text-align:right;-webkit-text-stroke:0.3px #000;">59336</div>
<div class="t " style="left:1272px;top:494.58px;font-size:21.1px;line-height:25px;color:#000;width:174.6px;text-align:right;-webkit-text-stroke:0.3px #000;">937.65</div>
<div class="t " style="left:1453px;top:494.58px;font-size:21.1px;line-height:25px;color:#000;width:255.6px;text-align:right;-webkit-text-stroke:0.3px #000;">151</div>
<div class="t " style="left:1715px;top:494.58px;font-size:21.1px;line-height:25px;color:#000;width:255.6px;text-align:right;-webkit-text-stroke:0.3px #000;">2</div>
<div class="t " style="left:73px;top:528.58px;font-size:21.1px;line-height:25px;color:#000;width:315.6px;text-align:right;-webkit-text-stroke:0.3px #000;">2025-10-07</div>
<div class="t " style="left:395px;top:528.58px;font-size:21.1px;line-height:25px;color:#000;width:430.6px;text-align:right;-webkit-text-stroke:0.3px #000;">13.328638</div>
<div class="t " style="left:832px;top:528.58px;font-size:21.1px;line-height:25px;color:#000;width:135.6px;text-align:right;-webkit-text-stroke:0.3px #000;">0.273957</div>
<div class="t " style="left:974px;top:528.58px;font-size:21.1px;line-height:25px;color:#000;width:161.6px;text-align:right;-webkit-text-stroke:0.3px #000;">90160</div>
<div class="t " style="left:1142px;top:528.58px;font-size:21.1px;line-height:25px;color:#000;width:123.6px;text-align:right;-webkit-text-stroke:0.3px #000;">51111</div>
<div class="t " style="left:1272px;top:528.58px;font-size:21.1px;line-height:25px;color:#000;width:174.6px;text-align:right;-webkit-text-stroke:0.3px #000;">1201.71</div>
<div class="t " style="left:1453px;top:528.58px;font-size:21.1px;line-height:25px;color:#000;width:255.6px;text-align:right;-webkit-text-stroke:0.3px #000;">143</div>
<div class="t " style="left:1715px;top:528.58px;font-size:21.1px;line-height:25px;color:#000;width:255.6px;text-align:right;-webkit-text-stroke:0.3px #000;">1</div>
<div class="t " style="left:73px;top:562.58px;font-size:21.1px;line-height:25px;color:#000;width:315.6px;text-align:right;-webkit-text-stroke:0.3px #000;">2025-10-08</div>
<div class="t " style="left:395px;top:562.58px;font-size:21.1px;line-height:25px;color:#000;width:430.6px;text-align:right;-webkit-text-stroke:0.3px #000;">13.057787</div>
<div class="t " style="left:832px;top:562.58px;font-size:21.1px;line-height:25px;color:#000;width:135.6px;text-align:right;-webkit-text-stroke:0.3px #000;">0.308626</div>
<div class="t " style="left:974px;top:562.58px;font-size:21.1px;line-height:25px;color:#000;width:161.6px;text-align:right;-webkit-text-stroke:0.3px #000;">96233</div>
<div class="t " style="left:1142px;top:562.58px;font-size:21.1px;line-height:25px;color:#000;width:123.6px;text-align:right;-webkit-text-stroke:0.3px #000;">56243</div>
<div class="t " style="left:1272px;top:562.58px;font-size:21.1px;line-height:25px;color:#000;width:174.6px;text-align:right;-webkit-text-stroke:0.3px #000;">1256.59</div>
<div class="t " style="left:1453px;top:562.58px;font-size:21.1px;line-height:25px;color:#000;width:255.6px;text-align:right;-webkit-text-stroke:0.3px #000;">187</div>
<div class="t " style="left:1715px;top:562.58px;font-size:21.1px;line-height:25px;color:#000;width:255.6px;text-align:right;-webkit-text-stroke:0.3px #000;">2</div>
<div class="t " style="left:73px;top:596.58px;font-size:21.1px;line-height:25px;color:#000;width:315.6px;text-align:right;-webkit-text-stroke:0.3px #000;">2025-10-09</div>
<div class="t " style="left:395px;top:596.58px;font-size:21.1px;line-height:25px;color:#000;width:430.6px;text-align:right;-webkit-text-stroke:0.3px #000;">12.845734</div>
<div class="t " style="left:832px;top:596.58px;font-size:21.1px;line-height:25px;color:#000;width:135.6px;text-align:right;-webkit-text-stroke:0.3px #000;">0.26937</div>
<div class="t " style="left:974px;top:596.58px;font-size:21.1px;line-height:25px;color:#000;width:161.6px;text-align:right;-webkit-text-stroke:0.3px #000;">115826</div>
<div class="t " style="left:1142px;top:596.58px;font-size:21.1px;line-height:25px;color:#000;width:123.6px;text-align:right;-webkit-text-stroke:0.3px #000;">63427</div>
<div class="t " style="left:1272px;top:596.58px;font-size:21.1px;line-height:25px;color:#000;width:174.6px;text-align:right;-webkit-text-stroke:0.3px #000;">1487.87</div>
<div class="t " style="left:1453px;top:596.58px;font-size:21.1px;line-height:25px;color:#000;width:255.6px;text-align:right;-webkit-text-stroke:0.3px #000;">187</div>
<div class="t " style="left:1715px;top:596.58px;font-size:21.1px;line-height:25px;color:#000;width:255.6px;text-align:right;-webkit-text-stroke:0.3px #000;">1</div>
<div class="t " style="left:73px;top:630.58px;font-size:21.1px;line-height:25px;color:#000;width:315.6px;text-align:right;-webkit-text-stroke:0.3px #000;">2025-10-10</div>
<div class="t " style="left:395px;top:630.58px;font-size:21.1px;line-height:25px;color:#000;width:430.6px;text-align:right;-webkit-text-stroke:0.3px #000;">12.614591</div>
<div class="t " style="left:832px;top:630.58px;font-size:21.1px;line-height:25px;color:#000;width:135.6px;text-align:right;-webkit-text-stroke:0.3px #000;">0.296703</div>
<div class="t " style="left:974px;top:630.58px;font-size:21.1px;line-height:25px;color:#000;width:161.6px;text-align:right;-webkit-text-stroke:0.3px #000;">108189</div>
<div class="t " style="left:1142px;top:630.58px;font-size:21.1px;line-height:25px;color:#000;width:123.6px;text-align:right;-webkit-text-stroke:0.3px #000;">62559</div>
<div class="t " style="left:1272px;top:630.58px;font-size:21.1px;line-height:25px;color:#000;width:174.6px;text-align:right;-webkit-text-stroke:0.3px #000;">1364.76</div>
<div class="t " style="left:1453px;top:630.58px;font-size:21.1px;line-height:25px;color:#000;width:255.6px;text-align:right;-webkit-text-stroke:0.3px #000;">186</div>
<div class="t " style="left:73px;top:664.58px;font-size:21.1px;line-height:25px;color:#000;width:315.6px;text-align:right;-webkit-text-stroke:0.3px #000;">2025-10-11</div>
<div class="t " style="left:395px;top:664.58px;font-size:21.1px;line-height:25px;color:#000;width:430.6px;text-align:right;-webkit-text-stroke:0.3px #000;">8.754171</div>
<div class="t " style="left:832px;top:664.58px;font-size:21.1px;line-height:25px;color:#000;width:135.6px;text-align:right;-webkit-text-stroke:0.3px #000;">0.48839</div>
<div class="t " style="left:974px;top:664.58px;font-size:21.1px;line-height:25px;color:#000;width:161.6px;text-align:right;-webkit-text-stroke:0.3px #000;">57536</div>
<div class="t " style="left:1142px;top:664.58px;font-size:21.1px;line-height:25px;color:#000;width:123.6px;text-align:right;-webkit-text-stroke:0.3px #000;">42162</div>
<div class="t " style="left:1272px;top:664.58px;font-size:21.1px;line-height:25px;color:#000;width:174.6px;text-align:right;-webkit-text-stroke:0.3px #000;">503.68</div>
<div class="t " style="left:1453px;top:664.58px;font-size:21.1px;line-height:25px;color:#000;width:255.6px;text-align:right;-webkit-text-stroke:0.3px #000;">153</div>
<div class="t " style="left:1715px;top:664.58px;font-size:21.1px;line-height:25px;color:#000;width:255.6px;text-align:right;-webkit-text-stroke:0.3px #000;">1</div>
<div class="t " style="left:73px;top:698.58px;font-size:21.1px;line-height:25px;color:#000;width:315.6px;text-align:right;-webkit-text-stroke:0.3px #000;">2025-10-12</div>
<div class="t " style="left:395px;top:698.58px;font-size:21.1px;line-height:25px;color:#000;width:430.6px;text-align:right;-webkit-text-stroke:0.3px #000;">7.996587</div>
<div class="t " style="left:832px;top:698.58px;font-size:21.1px;line-height:25px;color:#000;width:135.6px;text-align:right;-webkit-text-stroke:0.3px #000;">0.349873</div>
<div class="t " style="left:974px;top:698.58px;font-size:21.1px;line-height:25px;color:#000;width:161.6px;text-align:right;-webkit-text-stroke:0.3px #000;">58021</div>
<div class="t " style="left:1142px;top:698.58px;font-size:21.1px;line-height:25px;color:#000;width:123.6px;text-align:right;-webkit-text-stroke:0.3px #000;">42415</div>
<div class="t " style="left:1272px;top:698.58px;font-size:21.1px;line-height:25px;color:#000;width:174.6px;text-align:right;-webkit-text-stroke:0.3px #000;">463.97</div>
<div class="t " style="left:1453px;top:698.58px;font-size:21.1px;line-height:25px;color:#000;width:255.6px;text-align:right;-webkit-text-stroke:0.3px #000;">126</div>
<div class="t " style="left:1715px;top:698.58px;font-size:21.1px;line-height:25px;color:#000;width:255.6px;text-align:right;-webkit-text-stroke:0.3px #000;">2</div>
<div class="t " style="left:73px;top:732.58px;font-size:21.1px;line-height:25px;color:#000;width:315.6px;text-align:right;-webkit-text-stroke:0.3px #000;">2025-10-13</div>
<div class="t " style="left:395px;top:732.58px;font-size:21.1px;line-height:25px;color:#000;width:430.6px;text-align:right;-webkit-text-stroke:0.3px #000;">10.251465</div>
<div class="t " style="left:832px;top:732.58px;font-size:21.1px;line-height:25px;color:#000;width:135.6px;text-align:right;-webkit-text-stroke:0.3px #000;">0.276736</div>
<div class="t " style="left:974px;top:732.58px;font-size:21.1px;line-height:25px;color:#000;width:161.6px;text-align:right;-webkit-text-stroke:0.3px #000;">95759</div>
<div class="t " style="left:1142px;top:732.58px;font-size:21.1px;line-height:25px;color:#000;width:123.6px;text-align:right;-webkit-text-stroke:0.3px #000;">60661</div>
<div class="t " style="left:1272px;top:732.58px;font-size:21.1px;line-height:25px;color:#000;width:174.6px;text-align:right;-webkit-text-stroke:0.3px #000;">981.67</div>
<div class="t " style="left:1453px;top:732.58px;font-size:21.1px;line-height:25px;color:#000;width:255.6px;text-align:right;-webkit-text-stroke:0.3px #000;">162</div>
<div class="t " style="left:1715px;top:732.58px;font-size:21.1px;line-height:25px;color:#000;width:255.6px;text-align:right;-webkit-text-stroke:0.3px #000;">1</div>
<div class="t " style="left:73px;top:766.58px;font-size:21.1px;line-height:25px;color:#000;width:315.6px;text-align:right;-webkit-text-stroke:0.3px #000;">2025-10-14</div>
<div class="t " style="left:395px;top:766.58px;font-size:21.1px;line-height:25px;color:#000;width:430.6px;text-align:right;-webkit-text-stroke:0.3px #000;">12.330843</div>
<div class="t " style="left:832px;top:766.58px;font-size:21.1px;line-height:25px;color:#000;width:135.6px;text-align:right;-webkit-text-stroke:0.3px #000;">0.291657</div>
<div class="t " style="left:974px;top:766.58px;font-size:21.1px;line-height:25px;color:#000;width:161.6px;text-align:right;-webkit-text-stroke:0.3px #000;">111775</div>
<div class="t " style="left:1142px;top:766.58px;font-size:21.1px;line-height:25px;color:#000;width:123.6px;text-align:right;-webkit-text-stroke:0.3px #000;">58005</div>
<div class="t " style="left:1272px;top:766.58px;font-size:21.1px;line-height:25px;color:#000;width:174.6px;text-align:right;-webkit-text-stroke:0.3px #000;">1378.28</div>
<div class="t " style="left:1453px;top:766.58px;font-size:21.1px;line-height:25px;color:#000;width:255.6px;text-align:right;-webkit-text-stroke:0.3px #000;">194</div>
<div class="t " style="left:1715px;top:766.58px;font-size:21.1px;line-height:25px;color:#000;width:255.6px;text-align:right;-webkit-text-stroke:0.3px #000;">1</div>
<div class="t " style="left:73px;top:800.58px;font-size:21.1px;line-height:25px;color:#000;width:315.6px;text-align:right;-webkit-text-stroke:0.3px #000;">2025-10-15</div>
<div class="t " style="left:395px;top:800.58px;font-size:21.1px;line-height:25px;color:#000;width:430.6px;text-align:right;-webkit-text-stroke:0.3px #000;">13.410969</div>
<div class="t " style="left:832px;top:800.58px;font-size:21.1px;line-height:25px;color:#000;width:135.6px;text-align:right;-webkit-text-stroke:0.3px #000;">0.352616</div>
<div class="t " style="left:974px;top:800.58px;font-size:21.1px;line-height:25px;color:#000;width:161.6px;text-align:right;-webkit-text-stroke:0.3px #000;">110602</div>
<div class="t " style="left:1142px;top:800.58px;font-size:21.1px;line-height:25px;color:#000;width:123.6px;text-align:right;-webkit-text-stroke:0.3px #000;">61841</div>
<div class="t " style="left:1272px;top:800.58px;font-size:21.1px;line-height:25px;color:#000;width:174.6px;text-align:right;-webkit-text-stroke:0.3px #000;">1483.28</div>
<div class="t " style="left:1453px;top:800.58px;font-size:21.1px;line-height:25px;color:#000;width:255.6px;text-align:right;-webkit-text-stroke:0.3px #000;">233</div>
<div class="t " style="left:1715px;top:800.58px;font-size:21.1px;line-height:25px;color:#000;width:255.6px;text-align:right;-webkit-text-stroke:0.3px #000;">3</div>
<div class="t " style="left:73px;top:834.58px;font-size:21.1px;line-height:25px;color:#000;width:315.6px;text-align:right;-webkit-text-stroke:0.3px #000;">2025-10-16</div>
<div class="t " style="left:395px;top:834.58px;font-size:21.1px;line-height:25px;color:#000;width:430.6px;text-align:right;-webkit-text-stroke:0.3px #000;">12.995696</div>
<div class="t " style="left:832px;top:834.58px;font-size:21.1px;line-height:25px;color:#000;width:135.6px;text-align:right;-webkit-text-stroke:0.3px #000;">0.309562</div>
<div class="t " style="left:974px;top:834.58px;font-size:21.1px;line-height:25px;color:#000;width:161.6px;text-align:right;-webkit-text-stroke:0.3px #000;">113386</div>
<div class="t " style="left:1142px;top:834.58px;font-size:21.1px;line-height:25px;color:#000;width:123.6px;text-align:right;-webkit-text-stroke:0.3px #000;">60077</div>
<div class="t " style="left:1272px;top:834.58px;font-size:21.1px;line-height:25px;color:#000;width:174.6px;text-align:right;-webkit-text-stroke:0.3px #000;">1473.53</div>
<div class="t " style="left:1453px;top:834.58px;font-size:21.1px;line-height:25px;color:#000;width:255.6px;text-align:right;-webkit-text-stroke:0.3px #000;">208</div>
<div class="t " style="left:1715px;top:834.58px;font-size:21.1px;line-height:25px;color:#000;width:255.6px;text-align:right;-webkit-text-stroke:0.3px #000;">1</div>
<div class="t " style="left:73px;top:868.58px;font-size:21.1px;line-height:25px;color:#000;width:315.6px;text-align:right;-webkit-text-stroke:0.3px #000;">2025-10-17</div>
<div class="t " style="left:395px;top:868.58px;font-size:21.1px;line-height:25px;color:#000;width:430.6px;text-align:right;-webkit-text-stroke:0.3px #000;">12.224639</div>
<div class="t " style="left:832px;top:868.58px;font-size:21.1px;line-height:25px;color:#000;width:135.6px;text-align:right;-webkit-text-stroke:0.3px #000;">0.277189</div>
<div class="t " style="left:974px;top:868.58px;font-size:21.1px;line-height:25px;color:#000;width:161.6px;text-align:right;-webkit-text-stroke:0.3px #000;">112198</div>
<div class="t " style="left:1142px;top:868.58px;font-size:21.1px;line-height:25px;color:#000;width:123.6px;text-align:right;-webkit-text-stroke:0.3px #000;">60120</div>
<div class="t " style="left:1272px;top:868.58px;font-size:21.1px;line-height:25px;color:#000;width:174.6px;text-align:right;-webkit-text-stroke:0.3px #000;">1371.58</div>
<div class="t " style="left:1453px;top:868.58px;font-size:21.1px;line-height:25px;color:#000;width:255.6px;text-align:right;-webkit-text-stroke:0.3px #000;">191</div>
<div class="t " style="left:1715px;top:868.58px;font-size:21.1px;line-height:25px;color:#000;width:255.6px;text-align:right;-webkit-text-stroke:0.3px #000;">1</div>
<div class="t " style="left:73px;top:902.58px;font-size:21.1px;line-height:25px;color:#000;width:315.6px;text-align:right;-webkit-text-stroke:0.3px #000;">2025-10-18</div>
<div class="t " style="left:395px;top:902.58px;font-size:21.1px;line-height:25px;color:#000;width:430.6px;text-align:right;-webkit-text-stroke:0.3px #000;">9.706831</div>
<div class="t " style="left:832px;top:902.58px;font-size:21.1px;line-height:25px;color:#000;width:135.6px;text-align:right;-webkit-text-stroke:0.3px #000;">0.49114</div>
<div class="t " style="left:974px;top:902.58px;font-size:21.1px;line-height:25px;color:#000;width:161.6px;text-align:right;-webkit-text-stroke:0.3px #000;">46219</div>
<div class="t " style="left:1142px;top:902.58px;font-size:21.1px;line-height:25px;color:#000;width:123.6px;text-align:right;-webkit-text-stroke:0.3px #000;">33416</div>
<div class="t " style="left:1272px;top:902.58px;font-size:21.1px;line-height:25px;color:#000;width:174.6px;text-align:right;-webkit-text-stroke:0.3px #000;">448.64</div>
<div class="t " style="left:1453px;top:902.58px;font-size:21.1px;line-height:25px;color:#000;width:255.6px;text-align:right;-webkit-text-stroke:0.3px #000;">123</div>
<div class="t " style="left:73px;top:936.58px;font-size:21.1px;line-height:25px;color:#000;width:315.6px;text-align:right;-webkit-text-stroke:0.3px #000;">2025-10-19</div>
<div class="t " style="left:395px;top:936.58px;font-size:21.1px;line-height:25px;color:#000;width:430.6px;text-align:right;-webkit-text-stroke:0.3px #000;">10.27226</div>
<div class="t " style="left:832px;top:936.58px;font-size:21.1px;line-height:25px;color:#000;width:135.6px;text-align:right;-webkit-text-stroke:0.3px #000;">0.465059</div>
<div class="t " style="left:974px;top:936.58px;font-size:21.1px;line-height:25px;color:#000;width:161.6px;text-align:right;-webkit-text-stroke:0.3px #000;">32469</div>
<div class="t " style="left:1142px;top:936.58px;font-size:21.1px;line-height:25px;color:#000;width:123.6px;text-align:right;-webkit-text-stroke:0.3px #000;">23967</div>
<div class="t " style="left:1272px;top:936.58px;font-size:21.1px;line-height:25px;color:#000;width:174.6px;text-align:right;-webkit-text-stroke:0.3px #000;">333.53</div>
<div class="t " style="left:1453px;top:936.58px;font-size:21.1px;line-height:25px;color:#000;width:255.6px;text-align:right;-webkit-text-stroke:0.3px #000;">89</div>
<div class="t " style="left:73px;top:970.58px;font-size:21.1px;line-height:25px;color:#000;width:315.6px;text-align:right;-webkit-text-stroke:0.3px #000;">2025-10-20</div>
<div class="t " style="left:395px;top:970.58px;font-size:21.1px;line-height:25px;color:#000;width:430.6px;text-align:right;-webkit-text-stroke:0.3px #000;">12.629785</div>
<div class="t " style="left:832px;top:970.58px;font-size:21.1px;line-height:25px;color:#000;width:135.6px;text-align:right;-webkit-text-stroke:0.3px #000;">0.296836</div>
<div class="t " style="left:974px;top:970.58px;font-size:21.1px;line-height:25px;color:#000;width:161.6px;text-align:right;-webkit-text-stroke:0.3px #000;">77147</div>
<div class="t " style="left:1142px;top:970.58px;font-size:21.1px;line-height:25px;color:#000;width:123.6px;text-align:right;-webkit-text-stroke:0.3px #000;">41520</div>
<div class="t " style="left:1272px;top:970.58px;font-size:21.1px;line-height:25px;color:#000;width:174.6px;text-align:right;-webkit-text-stroke:0.3px #000;">974.35</div>
<div class="t " style="left:1453px;top:970.58px;font-size:21.1px;line-height:25px;color:#000;width:255.6px;text-align:right;-webkit-text-stroke:0.3px #000;">122</div>
<div class="t " style="left:1715px;top:970.58px;font-size:21.1px;line-height:25px;color:#000;width:255.6px;text-align:right;-webkit-text-stroke:0.3px #000;">1</div>
<div class="t " style="left:73px;top:1004.58px;font-size:21.1px;line-height:25px;color:#000;width:315.6px;text-align:right;-webkit-text-stroke:0.3px #000;">2025-10-21</div>
<div class="t " style="left:395px;top:1004.58px;font-size:21.1px;line-height:25px;color:#000;width:430.6px;text-align:right;-webkit-text-stroke:0.3px #000;">14.404372</div>
<div class="t " style="left:832px;top:1004.58px;font-size:21.1px;line-height:25px;color:#000;width:135.6px;text-align:right;-webkit-text-stroke:0.3px #000;">0.301133</div>
<div class="t " style="left:974px;top:1004.58px;font-size:21.1px;line-height:25px;color:#000;width:161.6px;text-align:right;-webkit-text-stroke:0.3px #000;">84348</div>
<div class="t " style="left:1142px;top:1004.58px;font-size:21.1px;line-height:25px;color:#000;width:123.6px;text-align:right;-webkit-text-stroke:0.3px #000;">43424</div>
<div class="t " style="left:1272px;top:1004.58px;font-size:21.1px;line-height:25px;color:#000;width:174.6px;text-align:right;-webkit-text-stroke:0.3px #000;">1214.98</div>
<div class="t " style="left:1453px;top:1004.58px;font-size:21.1px;line-height:25px;color:#000;width:255.6px;text-align:right;-webkit-text-stroke:0.3px #000;">144</div>
<div class="t " style="left:1715px;top:1004.58px;font-size:21.1px;line-height:25px;color:#000;width:255.6px;text-align:right;-webkit-text-stroke:0.3px #000;">2</div>
<div class="t " style="left:73px;top:1038.58px;font-size:21.1px;line-height:25px;color:#000;width:315.6px;text-align:right;-webkit-text-stroke:0.3px #000;">2025-10-22</div>
<div class="t " style="left:395px;top:1038.58px;font-size:21.1px;line-height:25px;color:#000;width:430.6px;text-align:right;-webkit-text-stroke:0.3px #000;">15.80461</div>
<div class="t " style="left:832px;top:1038.58px;font-size:21.1px;line-height:25px;color:#000;width:135.6px;text-align:right;-webkit-text-stroke:0.3px #000;">0.439078</div>
<div class="t " style="left:974px;top:1038.58px;font-size:21.1px;line-height:25px;color:#000;width:161.6px;text-align:right;-webkit-text-stroke:0.3px #000;">4555</div>
<div class="t " style="left:1142px;top:1038.58px;font-size:21.1px;line-height:25px;color:#000;width:123.6px;text-align:right;-webkit-text-stroke:0.3px #000;">3524</div>
<div class="t " style="left:1272px;top:1038.58px;font-size:21.1px;line-height:25px;color:#000;width:174.6px;text-align:right;-webkit-text-stroke:0.3px #000;">71.99</div>
<div class="t " style="left:1453px;top:1038.58px;font-size:21.1px;line-height:25px;color:#000;width:255.6px;text-align:right;-webkit-text-stroke:0.3px #000;">9</div>
<div class="a" style="left:0px;top:1432.4px;width:2265px;height:19.6px;background:#fff;"></div>
<div class="a" style="left:0px;top:1432.4px;width:71px;height:19.6px;background:#f5f5f5;"></div>
<div class="a" style="left:0px;top:1431.9px;width:2265px;height:1.1px;background:#dedede;"></div>
<div class="a" style="left:70.2px;top:1433px;width:2.5px;height:18.4px;background:#d6dce6;"></div>
<div class="a" style="left:74.2px;top:1435.1px;width:955.8px;height:14.6px;background:#d4d6da;border-radius:7.3px;"></div>
<div class="a" style="left:2196.4px;top:1433px;width:68.6px;height:19px;background:#f6f6f6;"></div>
<div class="a" style="left:2196px;top:1433px;width:1.2px;height:19px;background:#dcdcdc;"></div>
<div class="a" style="left:2222px;top:1433px;width:1.2px;height:19px;background:#dcdcdc;"></div>
<div class="a" style="left:2247px;top:1433px;width:1.2px;height:19px;background:#dcdcdc;"></div>
<svg class="a" style="left:2205px;top:1437.8px;" width="4.9" height="7.9" viewBox="0 0 4.9 7.9"><path d="M4.9 0v7.9L0 3.95z" fill="#9a9a9a"/></svg>
<svg class="a" style="left:2232.6px;top:1437.8px;" width="4.9" height="7.9" viewBox="0 0 4.9 7.9"><path d="M0 0v7.9L4.9 3.95z" fill="#9a9a9a"/></svg>
<div class="a" style="left:2292px;top:22px;width:531px;height:1430px;background:#edf2fa;border-radius:25.5px 25.5px 0 0;"></div>
<div class="t " style="left:2317.75px;top:51.82px;font-size:25.6px;line-height:31px;color:#444746;letter-spacing:1.062px;-webkit-text-stroke:0.6px #444746;">Coefficient</div>
<svg class="a" style="left:2767px;top:57px;" width="22" height="21" viewBox="0 0 22 21"><path d="M1 1 L21 20 M21 1 L1 20" stroke="#444746" stroke-width="2.9" fill="none"/></svg>
<div class="a" style="left:2317px;top:112px;width:480px;height:1340px;overflow:hidden;"><div class="a" style="left:0;top:0;width:480px;height:1347px;background:#fff;border-radius:17px;overflow:hidden;">
<svg class="a" style="left:45.8px;top:153.5px;" width="20.8" height="33.3" viewBox="0 0 320 512"><path d="M279.14 288l14.22-92.66h-88.91v-60.13c0-25.35 12.42-50.06 52.24-50.06h40.42V6.26S260.43 0 225.36 0c-73.22 0-121.08 44.38-121.08 124.72v70.62H22.89V288h81.39v224h100.17V288z" fill="#2468e4"/></svg>
<div class="t " style="left:109.5px;top:129.68px;font-size:24px;line-height:29px;color:#222;letter-spacing:0.565px;-webkit-text-stroke:0.3px #222;">Facebook Ads: Reach by</div>
<div class="t " style="left:109.5px;top:159.18px;font-size:24px;line-height:29px;color:#222;letter-spacing:0.583px;-webkit-text-stroke:0.3px #222;">Date</div>
<div class="a" style="left:110px;top:189px;width:19px;height:19px;background:#32b432;border-radius:50%;"></div>
<svg class="a" style="left:114px;top:193.4px;" width="11" height="10" viewBox="0 0 11 10"><path d="M1.6 5.2 L4.4 8 L9.4 2.4" fill="none" stroke="#fff" stroke-width="1.8"/></svg>
<div class="t " style="left:142.5px;top:188.76px;font-size:18px;line-height:22px;color:#7f7f7f;letter-spacing:-0.206px;">Refreshed just now</div>
<div class="a" style="left:436.7px;top:156.7px;width:6.6px;height:6.6px;background:#808080;border-radius:50%;"></div>
<div class="a" style="left:436.7px;top:166.4px;width:6.6px;height:6.6px;background:#808080;border-radius:50%;"></div>
<div class="a" style="left:436.7px;top:176.0px;width:6.6px;height:6.6px;background:#808080;border-radius:50%;"></div>
<div class="a" style="left:24px;top:238px;width:432px;height:139.5px;background:#f2f2f2;border-radius:7.5px;"></div>
<svg class="a" style="left:39px;top:258px;" width="27.5" height="27.5" viewBox="0 0 24 24"><g fill="none" stroke="#222" stroke-width="2.5"><path d="M2.25 5.4h19.5v16.9H2.25z"/><path d="M7.3 1v4.6M16.7 1v4.6" stroke-width="2.7" stroke-linecap="round"/><path d="M2.25 7.4h19.5" stroke-width="3.6"/><path d="M8 14.6l2.9 2.9 5.6-5.8" stroke-width="2.5"/></g><circle cx="7.3" cy="7.3" r="1.25" fill="#f2f2f2"/><circle cx="16.7" cy="7.3" r="1.25" fill="#f2f2f2"/></svg>
<div class="t " style="left:82.5px;top:261.48px;font-size:21.7px;line-height:26px;color:#222;font-weight:bold;letter-spacing:-0.5px;">Refresh Schedule</div>
<div class="a" style="left:394.5px;top:258.8px;width:45.5px;height:26.2px;background:#b5b5b5;border-radius:13.1px;"></div>
<div class="a" style="left:397.8px;top:262px;width:20px;height:20px;background:#fff;border-radius:50%;box-shadow:0 1px 2px rgba(0,0,0,.22);"></div>
<div class="t " style="left:85.0px;top:299.57px;font-size:22px;line-height:26px;color:#555;letter-spacing:0.117px;">Daily at 9:00 AM</div>
<div class="t " style="left:85.0px;top:334.57px;font-size:22px;line-height:26px;color:#555;letter-spacing:0.114px;">Add snapshot</div>
<div class="t " style="left:400.25px;top:334.37px;font-size:22px;line-height:26px;color:#1d4af6;letter-spacing:0.417px;">edit</div>
<div class="a" style="left:24px;top:401.8px;width:432px;height:620px;background:#eaf0fc;border-radius:7.5px;"></div>
<svg class="a" style="left:39px;top:437.5px;" width="27.5" height="27.5" viewBox="0 0 24 24"><g fill="none" stroke="#222" stroke-width="2.5"><rect x="2.3" y="2.6" width="19.4" height="18.8" rx="3"/><path d="M2.3 9h19.4M2.3 15h19.4M8.6 2.6v18.8"/></g></svg>
<div class="t " style="left:82.0px;top:424.48px;font-size:21.7px;line-height:26px;color:#222;font-weight:bold;letter-spacing:-0.37px;">Ad Account: Coefficient :</div>
<div class="t " style="left:82.0px;top:456.68px;font-size:21.7px;line-height:26px;color:#222;font-weight:bold;letter-spacing:-0.237px;">Coefficient</div>
<div class="t " style="left:402.5px;top:422.87px;font-size:22px;line-height:26px;color:#1d4af6;letter-spacing:0.333px;">edit</div>
<div class="a" style="left:72px;top:501px;width:336px;height:3px;background:#fff;"></div>
<div class="t " style="left:40.75px;top:533.18px;font-size:21.7px;line-height:26px;color:#222;font-weight:bold;letter-spacing:-0.479px;">Metrics</div>
<div class="a" style="left:40px;top:578px;width:77px;height:37.6px;background:#cce6fc;border-radius:9px;"></div>
<div class="t " style="left:49.0px;top:583.34px;font-size:21.8px;line-height:26px;color:#222;letter-spacing:-0.906px;">Reach</div>
<div class="a" style="left:124px;top:578px;width:134.80000000000018px;height:37.6px;background:#cce6fc;border-radius:9px;"></div>
<div class="t " style="left:132.5px;top:583.34px;font-size:21.8px;line-height:26px;color:#222;letter-spacing:0.025px;">Impressions</div>
<div class="a" style="left:265px;top:578px;width:155px;height:37.6px;background:#cce6fc;border-radius:9px;"></div>
<div class="t " style="left:273.25px;top:583.34px;font-size:21.8px;line-height:26px;color:#222;letter-spacing:0.364px;">Amount spent</div>
<div class="a" style="left:40px;top:622.4px;width:97.80000000000018px;height:37.6px;background:#cce6fc;border-radius:9px;"></div>
<div class="t " style="left:49.0px;top:627.74px;font-size:21.8px;line-height:26px;color:#222;letter-spacing:-0.812px;">CTR (all)</div>
<div class="a" style="left:144px;top:622.4px;width:159.80000000000018px;height:37.6px;background:#cce6fc;border-radius:9px;"></div>
<div class="t " style="left:152.5px;top:627.74px;font-size:21.8px;line-height:26px;color:#222;letter-spacing:-0.739px;">CPM (cost p…</div>
<div class="a" style="left:311px;top:622.4px;width:116.80000000000018px;height:37.6px;background:#cce6fc;border-radius:9px;"></div>
<div class="t " style="left:319.5px;top:627.74px;font-size:21.8px;line-height:26px;color:#222;letter-spacing:0.037px;">Link clicks</div>
<div class="a" style="left:40px;top:667px;width:159.80000000000018px;height:37.6px;background:#cce6fc;border-radius:9px;"></div>
<div class="t " style="left:49.0px;top:672.34px;font-size:21.8px;line-height:26px;color:#222;letter-spacing:-0.458px;">Registration…</div>
<div class="t " style="left:40.75px;top:731.48px;font-size:21.7px;line-height:26px;color:#222;font-weight:bold;letter-spacing:-0.542px;">Breakdowns</div>
<div class="a" style="left:40px;top:776.2px;width:62.80000000000018px;height:37.6px;background:#cce6fc;border-radius:9px;"></div>
<div class="t " style="left:49.0px;top:781.54px;font-size:21.8px;line-height:26px;color:#222;letter-spacing:-0.333px;">Date</div>
<div class="t " style="left:40.75px;top:840.48px;font-size:21.7px;line-height:26px;color:#222;font-weight:bold;letter-spacing:-0.34px;">Attribution Windows</div>
<div class="a" style="left:40px;top:885.2px;width:122px;height:37.6px;background:#cce6fc;border-radius:9px;"></div>
<div class="t " style="left:49.0px;top:890.54px;font-size:21.8px;line-height:26px;color:#222;letter-spacing:0.212px;">7-day click</div>
<div class="a" style="left:40px;top:955px;width:400px;height:51px;background:#f9fafe;border-radius:10px;box-shadow:0 1px 3px rgba(40,60,120,.10);"></div>
<div class="t " style="left:189.5px;top:968.24px;font-size:21.8px;line-height:26px;color:#1d4af6;letter-spacing:-0.075px;">Edit Fields</div>
<div class="a" style="left:24px;top:1046px;width:432px;height:119.5px;background:#f2f2f2;border-radius:7.5px;"></div>
<svg class="a" style="left:39px;top:1065.9px;" width="27.5" height="29" viewBox="0 0 24 24.5"><g fill="none" stroke="#222" stroke-width="2.6"><rect x="2.4" y="4.4" width="19.2" height="17.4" rx="3.2"/><path d="M2.4 10h19.2"/><path d="M7 0.3v4.4M12 0.3v4.4M17 0.3v4.4" stroke-width="2.7"/><path d="M6.3 13.6h3v3h-3z" fill="#222" stroke="none"/></g></svg>
<div class="t " style="left:82.5px;top:1069.48px;font-size:21.7px;line-height:26px;color:#222;font-weight:bold;letter-spacing:-0.438px;">Dates</div>
<div class="t " style="left:402.5px;top:1067.47px;font-size:22px;line-height:26px;color:#1d4af6;letter-spacing:0.333px;">edit</div>
<div class="t " style="left:82.5px;top:1115.47px;font-size:22px;line-height:26px;color:#222;letter-spacing:-0.052px;">Current Month</div>
<div class="a" style="left:24px;top:1190px;width:432px;height:120px;background:#f2f2f2;border-radius:7.5px;"></div>
<div class="a" style="left:43px;top:1216.1px;width:19.5px;height:1.8px;background:#555;"></div>
<div class="a" style="left:46.6px;top:1222.3px;width:12.4px;height:1.8px;background:#555;"></div>
<div class="a" style="left:49.8px;top:1228.5px;width:6px;height:1.8px;background:#555;"></div>
<div class="t " style="left:82.5px;top:1212.48px;font-size:21.7px;line-height:26px;color:#222;font-weight:bold;letter-spacing:-0.479px;">Filter &amp; Sort</div>
<div class="t " style="left:402.5px;top:1211.67px;font-size:22px;line-height:26px;color:#1d4af6;letter-spacing:0.333px;">edit</div>
<div class="a" style="left:0px;top:102px;width:480px;height:28px;background:linear-gradient(#f1f1f1,#fbfbfb 55%,#fff);"></div>
<div class="a" style="left:0px;top:0px;width:480px;height:102px;background:#fff;"></div>
<svg class="a" style="left:34px;top:41.5px;" width="15.5" height="20" viewBox="0 0 15.5 20"><path d="M13 1.2 L2.6 10 L13 18.8" fill="none" stroke="#333" stroke-width="2.05"/></svg>
<div class="t " style="left:79.0px;top:36.24px;font-size:24.4px;line-height:29px;color:#222;letter-spacing:0.463px;-webkit-text-stroke:0.25px #222;">Edit Import</div>
<div class="a" style="left:422.5px;top:26px;width:25.2px;height:25.2px;box-sizing:border-box;border:2.1px solid #595959;border-radius:50%;"></div>
<div class="t " style="left:430.2px;top:28.19px;font-size:18.5px;line-height:22px;color:#595959;">?</div>
<div class="t " style="left:415.75px;top:55.19px;font-size:18.2px;line-height:22px;color:#222;letter-spacing:0.417px;-webkit-text-stroke:0.45px #222;">Help</div>
<div class="a" style="left:24px;top:1237px;width:432px;height:13.5px;background:linear-gradient(rgba(0,0,0,0),rgba(0,0,0,.02) 50%,rgba(0,0,0,.07));"></div>
<div class="a" style="left:0px;top:1250.5px;width:480px;height:90px;background:#fff;"></div>
<div class="a" style="left:80px;top:1275px;width:320px;height:51px;background:#1f4dfd;border-radius:6.5px;box-shadow:0 2px 3px rgba(40,60,120,.14);"></div>
<svg class="a" style="left:194.3px;top:1279.2px;" width="38.6" height="38.6" viewBox="0 0 24 24"><path fill="#fff" d="M17.65 6.35C16.2 4.9 14.21 4 12 4c-4.42 0-7.99 3.58-7.99 8s3.57 8 7.99 8c3.73 0 6.84-2.55 7.73-6h-2.08c-.82 2.33-3.04 4-5.65 4-3.31 0-6-2.69-6-6s2.69-6 6-6c1.66 0 3.14.69 4.22 1.78L13 11h7V4l-2.35 2.35z"/></svg>
<div class="t " style="left:240.75px;top:1288.85px;font-size:21.5px;line-height:26px;color:#fff;letter-spacing:-0.75px;-webkit-text-stroke:0.5px #fff;">Run</div>
</div></div>
<div class="a" style="left:0px;top:1452px;width:2848px;height:60px;background:#f9fbfd;"></div>
<div class="a" style="left:209.5px;top:1453px;width:406px;height:59px;background:#dee6f5;"></div>
<div class="a" style="left:210px;top:1505px;width:404.8px;height:5.8px;background:#0b62e5;"></div>
<div class="a" style="left:0px;top:1451.6px;width:2848px;height:1.5px;background:#dadddd;"></div>
<div class="a" style="left:87px;top:1481.4px;width:16.8px;height:2.3px;background:#444746;"></div>
<div class="a" style="left:94.25px;top:1474.1px;width:2.3px;height:16.8px;background:#444746;"></div>
<div class="a" style="left:147.5px;top:1474.8px;width:22.5px;height:2.3px;background:#444746;"></div>
<div class="a" style="left:147.5px;top:1481.3px;width:22.5px;height:2.3px;background:#444746;"></div>
<div class="a" style="left:147.5px;top:1487.8px;width:22.5px;height:2.3px;background:#444746;"></div>
<div class="t " style="left:228.75px;top:1469.66px;font-size:22.6px;line-height:27px;color:#0b57d0;font-weight:bold;letter-spacing:0.567px;">Facebook Ads: Reach by Date</div>
<svg class="a" style="left:584.5px;top:1479.4px;" width="14" height="7.2" viewBox="0 0 14 7.2"><path d="M0 0h14l-7 7.2z" fill="#0b57d0"/></svg>
<svg class="a" style="left:0px;top:1496px;" width="24" height="16" viewBox="0 0 24 16"><path d="M0 4.2 Q4.6 14.2 20.8 16 L0 16 Z" fill="#0a1a1e"/></svg>
</div></body></html>
